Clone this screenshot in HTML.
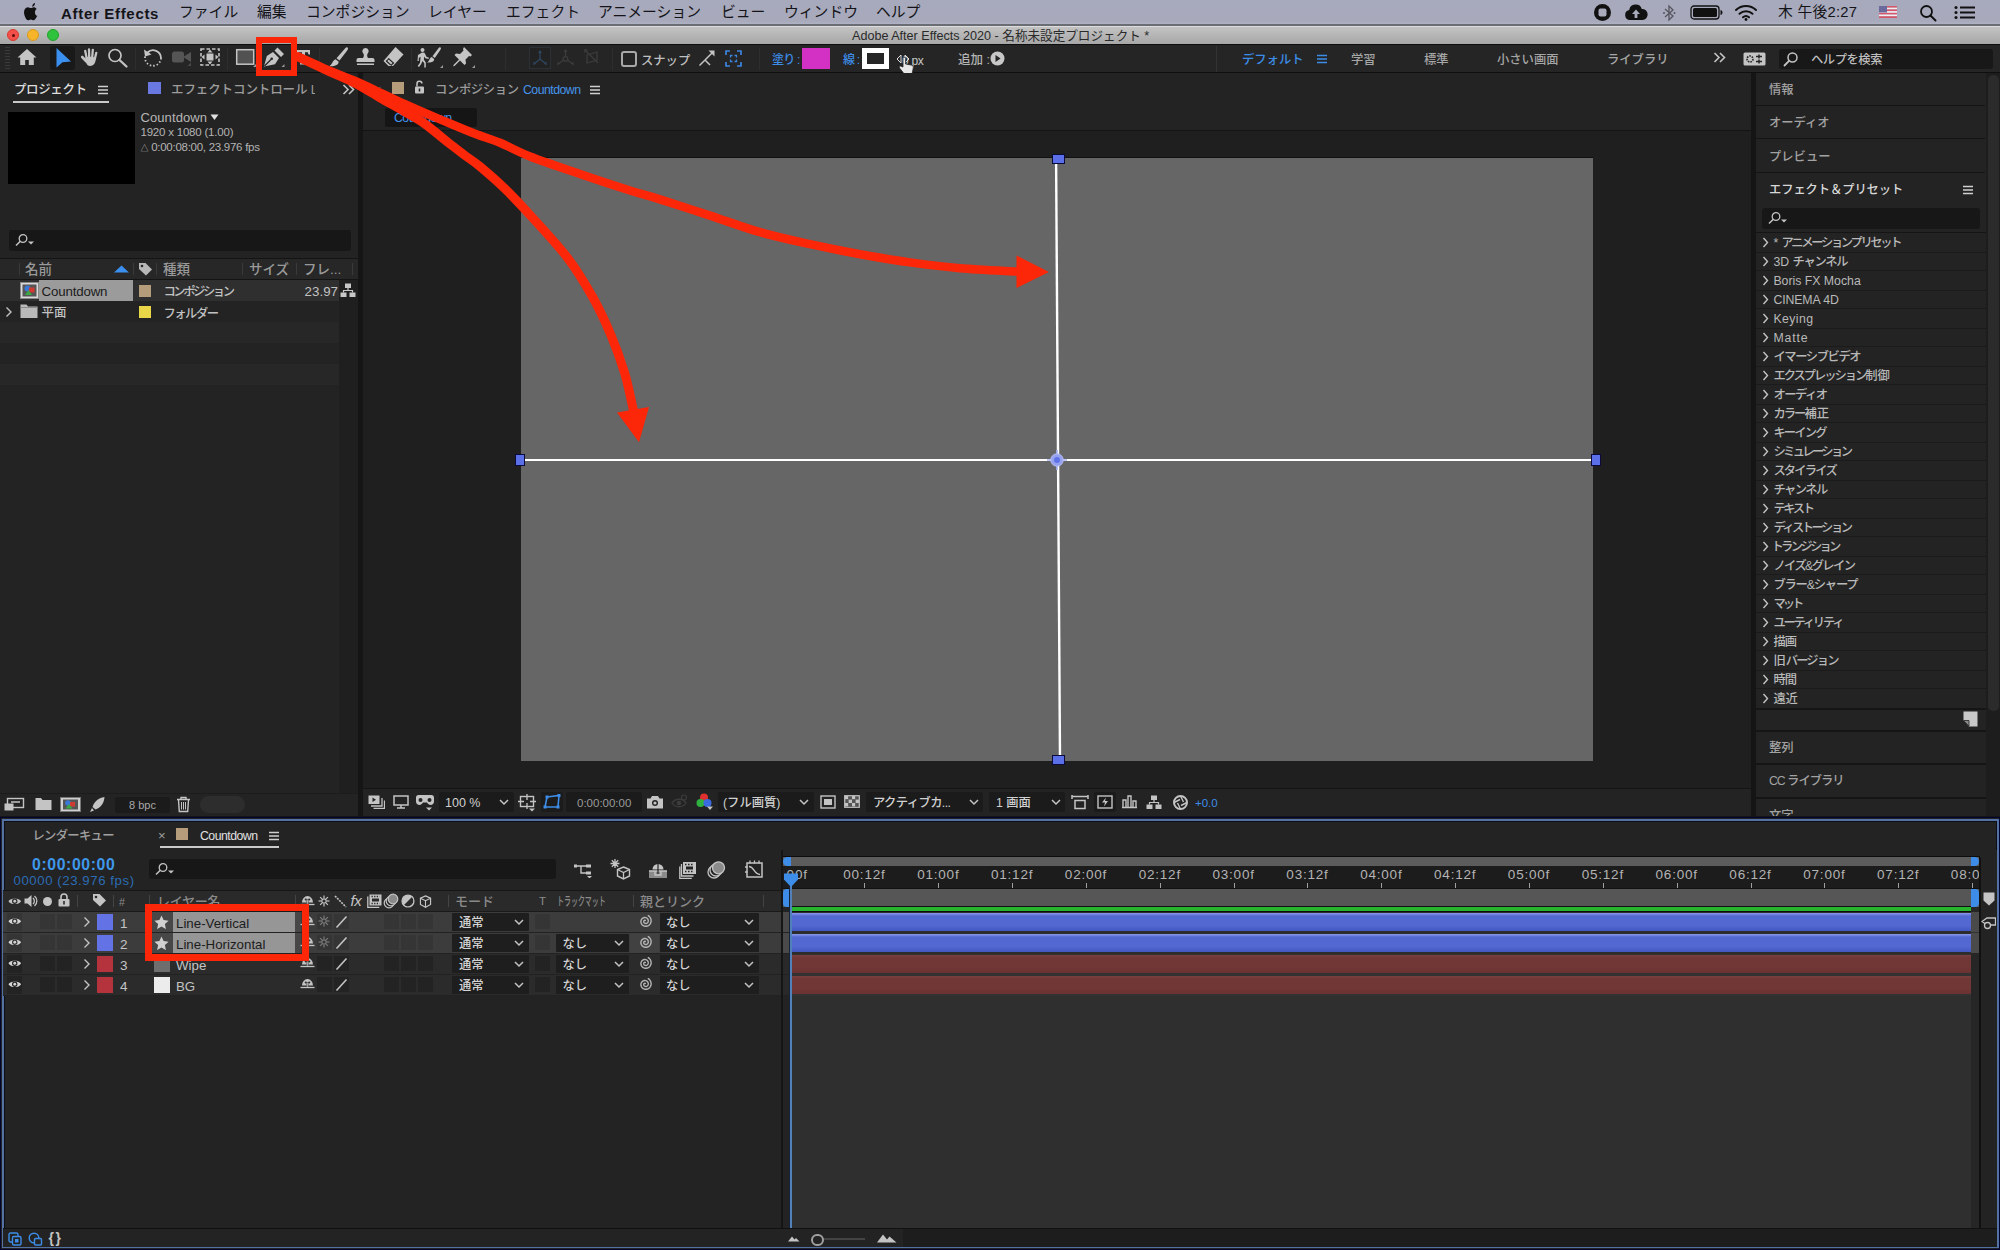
<!DOCTYPE html>
<html lang="ja"><head><meta charset="utf-8"><title>Adobe After Effects 2020</title>
<style>
html,body{margin:0;padding:0;background:#232323;}
body{width:2000px;height:1250px;overflow:hidden;font-family:"Liberation Sans","Noto Sans CJK JP",sans-serif;}
#root{position:relative;width:2000px;height:1250px;overflow:hidden;background:#232323;}
#root div,#root span,#root svg{position:absolute;box-sizing:border-box;}
.t{white-space:nowrap;line-height:1;font-weight:500;}
</style></head><body><div id="root">
<div style="left:0px;top:0px;width:2000px;height:25px;background:linear-gradient(#a7a9bc 0,#a8aabc 85%,#b2b6c6 100%);"></div>
<div style="left:0px;top:24px;width:2000px;height:2px;background:#6b6d74;"></div>
<svg style="left:21px;top:3px;" width="18" height="19" viewBox="0 0 18 19"><path fill="#111" d="M12.6 1c.1 1-.3 2-.9 2.700-.7.800-1.700 1.300-2.600 1.200-.1-1 .4-2 .9-2.600C10.700 1.500 11.800 1 12.600 1zM15.600 14.200c-.5 1.100-.7 1.600-1.300 2.500-.9 1.300-2.100 2.900-3.600 2.900-1.300 0-1.700-.9-3.500-.9s-2.200.9-3.500.9c-1.500 0-2.700-1.500-3.500-2.800C-2 13.600-2.200 9.700-.7 7.700c1-1.400 2.600-2.200 4.100-2.200 1.500 0 2.500.9 3.800.9 1.200 0 2-.9 3.800-.9 1.300 0 2.700.7 3.700 2-3.300 1.800-2.700 6.400.9 7.700z" transform="translate(4.300,-0.800) scale(0.770,0.920)"/></svg>
<span class="t" style="left:61px;top:5.5px;font-size:15px;color:#141418;letter-spacing:0.69px;font-weight:bold;">After Effects</span>
<span class="t" style="left:179px;top:5px;font-size:14.8px;color:#141418;font-weight:400;">ファイル</span>
<span class="t" style="left:257px;top:5px;font-size:14.8px;color:#141418;font-weight:400;">編集</span>
<span class="t" style="left:306px;top:5px;font-size:14.8px;color:#141418;font-weight:400;">コンポジション</span>
<span class="t" style="left:428px;top:5px;font-size:14.8px;color:#141418;font-weight:400;">レイヤー</span>
<span class="t" style="left:506px;top:5px;font-size:14.8px;color:#141418;font-weight:400;">エフェクト</span>
<span class="t" style="left:598px;top:5px;font-size:14.8px;color:#141418;font-weight:400;">アニメーション</span>
<span class="t" style="left:721px;top:5px;font-size:14.8px;color:#141418;font-weight:400;">ビュー</span>
<span class="t" style="left:784px;top:5px;font-size:14.8px;color:#141418;font-weight:400;">ウィンドウ</span>
<span class="t" style="left:876px;top:5px;font-size:14.8px;color:#141418;font-weight:400;">ヘルプ</span>
<svg style="left:1593px;top:3px;" width="19" height="19" viewBox="0 0 19 19"><circle cx="9.5" cy="9.5" r="8.5" fill="#111"/><rect x="5.500" y="5.500" width="8" height="8" rx="2" fill="#a8aabc"/></svg>
<svg style="left:1624px;top:3px;" width="24" height="18" viewBox="0 0 24 18"><path fill="#111" d="M6 17a5 5 0 0 1-.8-9.900A6.500 6.500 0 0 1 17.800 6 5.500 5.500 0 0 1 18.500 17z"/><path fill="#a8aabc" d="M12 6.500l4 4.500h-2.600v4h-2.800v-4H8z"/></svg>
<svg style="left:1662px;top:4px;" width="14" height="18" viewBox="0 0 14 18"><path fill="none" stroke="#55555f" stroke-width="1.300" d="M3 5l8 7-4 4V2l4 4-8 7"/><circle cx="2" cy="9" r="1" fill="#55555f"/><circle cx="12.500" cy="9" r="1" fill="#55555f"/></svg>
<svg style="left:1690px;top:5px;" width="34" height="15" viewBox="0 0 34 15"><rect x="1" y="1" width="28" height="13" rx="3" fill="none" stroke="#111" stroke-width="1.300"/><rect x="3" y="3" width="24" height="9" rx="1.500" fill="#111"/><path d="M30.500 5v5c1.400-.3 2-1.300 2-2.500s-.6-2.200-2-2.500z" fill="#111"/></svg>
<svg style="left:1734px;top:4px;" width="24" height="17" viewBox="0 0 24 17"><g fill="none" stroke="#111" stroke-width="2" stroke-linecap="round"><path d="M2 6a14.500 14.500 0 0 1 20 0"/><path d="M5.500 9.800a9.500 9.500 0 0 1 13 0"/><path d="M9 13.300a4.500 4.500 0 0 1 6 0"/></g><circle cx="12" cy="15.500" r="1.400" fill="#111"/></svg>
<span class="t" style="left:1778px;top:5px;font-size:14.8px;color:#141418;letter-spacing:0.24px;font-weight:400;">木 午後2:27</span>
<svg style="left:1879px;top:6px;" width="18" height="12" viewBox="0 0 18 12"><rect x="0" y="0.00" width="18" height="1.71" fill="#d6566a"/><rect x="0" y="1.71" width="18" height="1.71" fill="#f2eef2"/><rect x="0" y="3.43" width="18" height="1.71" fill="#d6566a"/><rect x="0" y="5.14" width="18" height="1.71" fill="#f2eef2"/><rect x="0" y="6.86" width="18" height="1.71" fill="#d6566a"/><rect x="0" y="8.57" width="18" height="1.71" fill="#f2eef2"/><rect x="0" y="10.29" width="18" height="1.71" fill="#d6566a"/><rect x="0" y="0" width="8" height="6.500" fill="#6a6a9c"/></svg>
<svg style="left:1919px;top:4px;" width="18" height="18" viewBox="0 0 18 18"><circle cx="7.500" cy="7.500" r="5.500" fill="none" stroke="#111" stroke-width="1.800"/><path d="M11.500 11.500l5 5" stroke="#111" stroke-width="2" stroke-linecap="round"/></svg>
<svg style="left:1954px;top:5px;" width="22" height="15" viewBox="0 0 22 15"><g fill="#111"><circle cx="2" cy="2.500" r="1.500"/><circle cx="2" cy="7.500" r="1.500"/><circle cx="2" cy="12.500" r="1.500"/><rect x="6" y="1.500" width="15" height="2"/><rect x="6" y="6.500" width="15" height="2"/><rect x="6" y="11.500" width="15" height="2"/></g></svg>
<div style="left:0px;top:26px;width:2000px;height:18px;background:linear-gradient(#c3c3c3,#a7a7a7);border-top:1px solid #dcdcdc;"></div>
<div style="left:7px;top:29px;width:12px;height:12px;background:#f4504a;border-radius:50%;border:0.5px solid #d8382f;"></div>
<div style="left:27px;top:29px;width:12px;height:12px;background:#f6b42a;border-radius:50%;border:0.5px solid #d99a1c;"></div>
<div style="left:47px;top:29px;width:12px;height:12px;background:#2fc23c;border-radius:50%;border:0.5px solid #1fa22b;"></div>
<div style="left:11.5px;top:33.5px;width:3px;height:3px;background:#5a0f0c;border-radius:50%;"></div>
<span class="t" style="left:852px;top:30px;font-size:12.6px;color:#2a2a2a;font-weight:400;">Adobe After Effects 2020 - 名称未設定プロジェクト *</span>
<div style="left:0px;top:44px;width:2000px;height:29px;background:#252525;"></div>
<div style="left:0px;top:44px;width:2000px;height:1px;background:#0e0e0e;"></div>
<div style="left:0px;top:72px;width:2000px;height:1px;background:#0f0f0f;"></div>
<div style="left:5px;top:47px;width:5px;height:22px;background:repeating-linear-gradient(#3a3a3a 0 1px,transparent 1px 3px);"></div>
<svg style="left:17px;top:48px;" width="20" height="18" viewBox="0 0 20 18"><path fill="#c4c4c4" d="M10 1L0.500 9.500h2.700V17h5v-5h3.600v5h5V9.500h2.700z"/></svg>
<div style="left:50px;top:46px;width:25px;height:24px;background:#191919;border-radius:3px;"></div>
<svg style="left:54px;top:46px;" width="20" height="24" viewBox="0 0 20 24"><path fill="#3b8fee" d="M2.500 2L17 15.500l-8.500 0.700L2.500 21.500z"/></svg>
<svg style="left:80px;top:47px;" width="20" height="20" viewBox="0 0 20 20"><g stroke="#c4c4c4" stroke-width="2.300" stroke-linecap="round" fill="none"><path d="M5.200 3.800L6.600 11"/><path d="M9 2.300L9.200 10"/><path d="M12.800 3L12.200 10.500"/><path d="M16.300 5.800L14.800 12"/><path d="M2.200 10L6.500 14.500" stroke-width="2.600"/></g><path d="M5.500 10.500c2-1.200 7.500-1.200 10.300 0.500 0 4-1.500 8-5.800 8-3 0-4.500-3-4.500-8.500z" fill="#c4c4c4"/></svg>
<svg style="left:106px;top:47px;" width="24" height="22" viewBox="0 0 24 22"><circle cx="9" cy="8.500" r="6" fill="none" stroke="#c4c4c4" stroke-width="1.700"/><path d="M13.500 13l7 6.500" stroke="#c4c4c4" stroke-width="2.300" stroke-linecap="round"/></svg>
<div style="left:135px;top:48px;width:1px;height:22px;background:#2e2e2e;"></div>
<svg style="left:142px;top:47px;" width="22" height="22" viewBox="0 0 22 22"><path d="M5.500 5.500A8 8 0 0 1 19 11" fill="none" stroke="#c4c4c4" stroke-width="1.800"/><path d="M19 11A8 8 0 1 1 3.200 9" fill="none" stroke="#c4c4c4" stroke-width="1.800" stroke-dasharray="1.500 2"/><path fill="#c4c4c4" d="M2 2.500l1 7 6.500-2z"/></svg>
<svg style="left:171px;top:50px;" width="24" height="18" viewBox="0 0 24 18"><rect x="1" y="1.500" width="12" height="11" rx="2.500" fill="#555"/><path d="M12 7l8-5v10z" fill="#555"/><path d="M20 16h-3.500l3.500-3.500z" fill="#4a4a4a"/></svg>
<svg style="left:200px;top:48px;" width="20" height="18" viewBox="0 0 20 18"><rect x="1" y="1" width="18" height="16" fill="none" stroke="#c4c4c4" stroke-width="1.600" stroke-dasharray="3.500 2"/><rect x="6.500" y="5.500" width="7" height="7" fill="#c4c4c4"/><path fill="#c4c4c4" d="M10 1.500l2.500 3h-5zM10 16.500l2.500-3h-5zM1.500 9l3-2.500v5zM18.500 9l-3-2.500v5z"/></svg>
<div style="left:227px;top:48px;width:1px;height:22px;background:#2e2e2e;"></div>
<svg style="left:235px;top:48px;" width="22" height="20" viewBox="0 0 22 20"><rect x="1.700" y="1.700" width="17" height="14.500" fill="#525252" stroke="#c4c4c4" stroke-width="1.500"/><path d="M21 19h-3l3-3z" fill="#999"/></svg>
<svg style="left:263px;top:47px;" width="22" height="21" viewBox="0 0 22 21"><path fill="#c4c4c4" d="M1 19.500l2.800-10.500L10 5l6 6-4 6.200zM11.500 3.500l3-3 6.500 6.500-3 3z"/><path d="M1.500 19l6.500-6.500" stroke="#252525" stroke-width="1.200"/><circle cx="8.700" cy="11.800" r="1.300" fill="#252525"/><path d="M21.500 20h-3l3-3z" fill="#999"/></svg>
<svg style="left:296px;top:49px;" width="16" height="18" viewBox="0 0 16 18"><path fill="#c4c4c4" d="M1 1h13v4.500h-1.500l-.7-2.200H9v10.500l2 .5v1.200H4v-1.200l2-.5V3.300H3.200l-.7 2.200H1z"/><path d="M15.500 17.500h-3l3-3z" fill="#999"/></svg>
<div style="left:319px;top:48px;width:1px;height:22px;background:#2e2e2e;"></div>
<svg style="left:328px;top:47px;" width="21" height="20" viewBox="0 0 21 20"><path fill="#c4c4c4" d="M19.500.5c1 .8.300 2-.3 3L11.500 13.500l-3-2.300L17 1.500c.7-.8 1.700-1.600 2.500-1zM7.500 12.200l3 2.400c.5 2.500-2 4.800-9.500 4.600 3.500-1.500 3-5.500 6.500-7z"/></svg>
<svg style="left:355px;top:47px;" width="21" height="20" viewBox="0 0 21 20"><path fill="#c4c4c4" d="M10.500 1a3.200 3.200 0 0 1 2.200 5.500c-.8 1-.8 3 .3 4.500h4.500c1.200 0 2 .8 2 2v2H1.500v-2c0-1.200.8-2 2-2H8c1.100-1.500 1.100-3.500.3-4.500A3.200 3.200 0 0 1 10.500 1zM2 16.500h17V18H2z"/></svg>
<svg style="left:382px;top:46px;" width="23" height="22" viewBox="0 0 23 22"><path fill="#c4c4c4" d="M13.500 1l8 7.500L11 20H6.500L1.500 15z"/><path d="M4.200 14.800l4.500 4M6.300 12.500l5.500 5" stroke="#252525" stroke-width="1.300"/><path d="M4 15l2.500-2.700 5.300 5L9.500 20z" fill="#252525"/><path d="M5.300 15l1.400-1.500 3.800 3.500-1.400 1.600z" fill="#c4c4c4"/></svg>
<div style="left:411px;top:48px;width:1px;height:22px;background:#2e2e2e;"></div>
<svg style="left:416px;top:47px;" width="28" height="22" viewBox="0 0 28 22"><circle cx="6.500" cy="3" r="2" fill="#c4c4c4"/><path fill="#c4c4c4" d="M2 8l4-2.500 2.500.3 2 4 2.500 1-.5 1.300-3.200-.9-1-1.600-.5 3 2 3v5H8.300v-4.300L6.500 14l-1.300 3L3 20l-1.300-.9L4 15.700l.6-6-1.800 1.200V14H1.500z"/><path fill="#c4c4c4" d="M24.500.5c.9.700.3 1.700-.2 2.500l-5.500 8-2.300-1.800L22.300 1.400c.6-.7 1.500-1.400 2.200-.9zM15.700 10l2.400 1.900c.4 2-1.600 3.800-7.100 3.600 2.700-1.200 2-4.300 4.700-5.500z"/><path d="M27 21h-3l3-3z" fill="#999"/></svg>
<svg style="left:452px;top:46px;" width="24" height="23" viewBox="0 0 24 23"><path fill="#c4c4c4" d="M12 1l8 8-1.500 1.500-1.500-.5-3.500 3.500.5 4-1.500 1.500-4.500-4.500-5.500 5.500-1.200.2.200-1.200 5.500-5.500L2.500 9 4 7.500l4 .5L11.500 4.500 11 3z"/><path d="M23 22h-3l3-3z" fill="#999"/></svg>
<div style="left:505px;top:48px;width:1px;height:22px;background:#2e2e2e;"></div>
<div style="left:529px;top:47px;width:22px;height:22px;background:#222;border:1px solid #2b3036;"></div>
<svg style="left:531px;top:49px;" width="18" height="18" viewBox="0 0 18 18"><path d="M9 2v8M9 10l-6 5M9 10l6 5" stroke="#2e4660" stroke-width="1.300" fill="none"/><path d="M9 1l2 3H7zM2 16l.8-3.500 2 2.500zM16 16l-.8-3.500-2 2.500z" fill="#2e4660"/></svg>
<svg style="left:556px;top:49px;" width="19" height="18" viewBox="0 0 19 18"><path d="M9.500 2v6M7.500 11l-5 4M11.500 11l5 4" stroke="#3c3c3c" stroke-width="1.300" fill="none"/><circle cx="9.500" cy="10" r="2.300" fill="none" stroke="#3c3c3c" stroke-width="1.300"/><path d="M9.500 0l2 3h-4zM1 16l.8-3.500 2 2.500zM18 16l-.8-3.500-2 2.500z" fill="#3c3c3c"/></svg>
<svg style="left:583px;top:48px;" width="18" height="18" viewBox="0 0 18 18"><path d="M2 2l13 13M4 7l10-3v8L4 15z" stroke="#3c3c3c" stroke-width="1.300" fill="none"/><path d="M1 1l4 .5L1.500 5z" fill="#3c3c3c"/></svg>
<div style="left:612px;top:48px;width:1px;height:22px;background:#2e2e2e;"></div>
<div style="left:621px;top:51px;width:16px;height:16px;border:2px solid #a8a8a8;border-radius:3px;"></div>
<span class="t" style="left:641px;top:55px;font-size:12.3px;color:#c0c0c0;">スナップ</span>
<svg style="left:698px;top:49px;" width="18" height="18" viewBox="0 0 18 18"><path d="M1.500 16.500L7 11l5 5M7 11l7-7" stroke="#c4c4c4" stroke-width="1.500" fill="none" stroke-dasharray="0"/><path d="M16.500 1.500v6l-6-6z" fill="#c4c4c4"/></svg>
<svg style="left:725px;top:50px;" width="17" height="17" viewBox="0 0 17 17"><g stroke="#3d84de" stroke-width="1.700" fill="none"><path d="M1 5V1h4M12 1h4v4M16 12v4h-4M5 16H1v-4"/><path d="M5.500 7.500v-2h2M9.500 5.500h2v2M11.500 9.500v2h-2M7.500 11.500h-2v-2" stroke-width="1.300"/></g></svg>
<div style="left:759px;top:48px;width:1px;height:22px;background:#2e2e2e;"></div>
<span class="t" style="left:772px;top:54px;font-size:12px;color:#3d8de8;letter-spacing:-0.800px;">塗り :</span>
<div style="left:802px;top:48px;width:28px;height:21px;background:#d331c4;"></div>
<span class="t" style="left:843px;top:54px;font-size:12px;color:#3d8de8;letter-spacing:-0.800px;">線 :</span>
<div style="left:862px;top:48px;width:27px;height:21px;background:#ffffff;"></div>
<div style="left:867px;top:53px;width:17px;height:11px;background:#262626;"></div>
<span class="t" style="left:902px;top:55px;font-size:12px;color:#c8c8c8;letter-spacing:-0.3px;">0 px</span>
<svg style="left:896px;top:52px;" width="16" height="14" viewBox="0 0 16 14"><path d="M1 7l4-4v8zM13 7l-4-4v8z" fill="none" stroke="#ddd" stroke-width="1"/></svg>
<svg style="left:897px;top:55px;" width="20" height="22" viewBox="0 0 20 22"><path fill="#e8e8e8" stroke="#222" stroke-width="0.800" d="M6 12V3.500c0-1.800 2.600-1.800 2.600 0V9l5.500 1c1.500.3 2.400 1.200 2.200 2.800l-.8 4.200c-.3 1.500-1.300 2.500-3 2.500H9.500c-1.500 0-2.400-.6-3.200-1.700L2.500 13c-.9-1.300.8-2.600 2-1.500z"/></svg>
<span class="t" style="left:958px;top:54px;font-size:12.5px;color:#b4b4b4;">追加 :</span>
<svg style="left:990px;top:51px;" width="15" height="15" viewBox="0 0 15 15"><circle cx="7.500" cy="7.500" r="7" fill="#c8c8c8"/><path d="M5.500 4l5 3.500-5 3.500z" fill="#252525"/></svg>
<div style="left:1216px;top:46px;width:1px;height:26px;background:#333;"></div>
<span class="t" style="left:1242px;top:54px;font-size:12.3px;color:#3d8de8;">デフォルト</span>
<svg style="left:1317px;top:54px;" width="10" height="10" viewBox="0 0 10 10"><path d="M0 1.500h10M0 5h10M0 8.500h10" stroke="#3d8de8" stroke-width="1.400"/></svg>
<span class="t" style="left:1351px;top:54px;font-size:12.3px;color:#a6a6a6;">学習</span>
<span class="t" style="left:1424px;top:54px;font-size:12.3px;color:#a6a6a6;">標準</span>
<span class="t" style="left:1497px;top:54px;font-size:12.3px;color:#a6a6a6;">小さい画面</span>
<span class="t" style="left:1607px;top:54px;font-size:12.3px;color:#a6a6a6;">ライブラリ</span>
<svg style="left:1713px;top:51.5px;" width="13" height="11" viewBox="0 0 13 11"><path d="M1.500 1l4.500 4.500L1.500 10M7 1l4.500 4.500L7 10" stroke="#c4c4c4" stroke-width="1.600" fill="none"/></svg>
<svg style="left:1742.5px;top:51.5px;" width="23" height="14" viewBox="0 0 23 14"><rect x="0.500" y="0.500" width="22" height="13" rx="1.500" fill="#c4c4c4"/><circle cx="7" cy="7" r="3" fill="none" stroke="#252525" stroke-width="1.600" stroke-dasharray="1.600 1"/><path d="M13 4.500h6M13 9.500h6M16 2.500v4M16 7.500v4" stroke="#252525" stroke-width="1.500"/></svg>
<div style="left:1779px;top:49px;width:214px;height:19.5px;background:#181818;border-radius:3px;"></div>
<svg style="left:1783px;top:51px;" width="16" height="16" viewBox="0 0 16 16"><circle cx="9.500" cy="6.500" r="4.500" fill="none" stroke="#c4c4c4" stroke-width="1.500"/><path d="M6.300 9.700L1.500 14.500" stroke="#c4c4c4" stroke-width="1.800" stroke-linecap="round"/></svg>
<span class="t" style="left:1811px;top:54px;font-size:12.3px;color:#bdbdbd;letter-spacing:-0.46px;">ヘルプを検索</span>
<div style="left:0px;top:73px;width:358px;height:743px;background:#232323;"></div>
<div style="left:358px;top:73px;width:5px;height:743px;background:#151515;"></div>
<span class="t" style="left:14px;top:84px;font-size:12.5px;color:#dedede;letter-spacing:-0.40px;font-weight:500;">プロジェクト</span>
<svg style="left:98px;top:85px;" width="11" height="10" viewBox="0 0 11 10"><path d="M0 1.500h10M0 5h10M0 8.500h10" stroke="#cfcfcf" stroke-width="1.300"/></svg>
<div style="left:13px;top:101px;width:96px;height:2px;background:#c9c9c9;"></div>
<div style="left:148px;top:82px;width:13px;height:12px;background:#6a78e2;"></div>
<span class="t" style="left:171px;top:84px;font-size:12.5px;color:#9c9c9c;width:144px;overflow:hidden;letter-spacing:-0.100px;">エフェクトコントロール L</span>
<svg style="left:342px;top:84px;" width="13" height="11" viewBox="0 0 13 11"><path d="M1.500 1l4.500 4.500L1.500 10M7 1l4.500 4.500L7 10" stroke="#c4c4c4" stroke-width="1.600" fill="none"/></svg>
<div style="left:8px;top:112px;width:127px;height:72px;background:#000;"></div>
<span class="t" style="left:140.5px;top:110.5px;font-size:13px;color:#b6b6b6;letter-spacing:0.09px;">Countdown</span>
<svg style="left:210px;top:114px;" width="9" height="7" viewBox="0 0 9 7"><path d="M0.500 0.500h8L4.500 6z" fill="#e0e0e0"/></svg>
<span class="t" style="left:140.5px;top:127px;font-size:11.5px;color:#b4b4b4;letter-spacing:-0.21px;">1920 x 1080 (1.00)</span>
<span class="t" style="left:140.5px;top:142px;font-size:11.5px;color:#b4b4b4;letter-spacing:-0.27px;"><span style="position:static;font-size:8px;">△</span> 0:00:08:00, 23.976 fps</span>
<div style="left:9px;top:230px;width:342px;height:21px;background:#171717;border-radius:3px;"></div>
<svg style="left:15px;top:233px;" width="22" height="14" viewBox="0 0 22 14"><circle cx="8" cy="5.500" r="3.800" fill="none" stroke="#c4c4c4" stroke-width="1.300"/><path d="M5.300 8.200L1 12.500" stroke="#c4c4c4" stroke-width="1.500"/><path d="M13 8.500h6l-3 3z" fill="#c4c4c4"/></svg>
<div style="left:0px;top:258px;width:358px;height:1px;background:#141414;"></div>
<div style="left:0px;top:259px;width:358px;height:20px;background:#272727;"></div>
<div style="left:0px;top:279px;width:358px;height:1px;background:#141414;"></div>
<div style="left:19px;top:263px;width:1px;height:12px;background:#3a3a3a;"></div>
<div style="left:133px;top:263px;width:1px;height:12px;background:#3a3a3a;"></div>
<div style="left:156px;top:263px;width:1px;height:12px;background:#3a3a3a;"></div>
<div style="left:242px;top:263px;width:1px;height:12px;background:#3a3a3a;"></div>
<div style="left:296px;top:263px;width:1px;height:12px;background:#3a3a3a;"></div>
<div style="left:352px;top:263px;width:1px;height:12px;background:#3a3a3a;"></div>
<span class="t" style="left:25px;top:263px;font-size:13.5px;color:#9a9a9a;">名前</span>
<svg style="left:114px;top:265px;" width="15" height="8" viewBox="0 0 15 8"><path d="M0 7.500L7.500 0.500 15 7.500z" fill="#3b8fee"/></svg>
<svg style="left:138px;top:262px;" width="15" height="15" viewBox="0 0 15 15"><path d="M1 1h6.500l6.500 6.500L8 13.500 1 7z" fill="#b8b8b8"/><circle cx="4" cy="4" r="1.300" fill="#272727"/></svg>
<span class="t" style="left:163px;top:263px;font-size:13.5px;color:#9a9a9a;">種類</span>
<span class="t" style="left:249px;top:263px;font-size:13.5px;color:#9a9a9a;">サイズ</span>
<span class="t" style="left:303px;top:263px;font-size:13.5px;color:#9a9a9a;">フレ...</span>
<div style="left:0px;top:280px;width:339px;height:21px;background:#2f2f2f;"></div>
<div style="left:339px;top:280px;width:19px;height:513px;background:#1f1f1f;"></div>
<div style="left:0px;top:322px;width:339px;height:21px;background:#272727;"></div>
<div style="left:0px;top:364px;width:339px;height:21px;background:#272727;"></div>
<svg style="left:20px;top:281px;" width="19" height="19" viewBox="0 0 19 19"><rect x="0.500" y="1.500" width="18" height="16" fill="#d9d9d9" stroke="#888" stroke-width="1"/><rect x="2.500" y="3.500" width="14" height="12" fill="#555"/><circle cx="7.500" cy="7.500" r="3" fill="#3a78d8"/><rect x="9" y="6.500" width="5.500" height="5" fill="#d03a30"/><path d="M5 14l3.500-5 3.500 5z" fill="#39a845"/></svg>
<div style="left:39px;top:280px;width:94px;height:21px;background:#9b9b9b;"></div>
<span class="t" style="left:41.5px;top:285px;font-size:13.3px;color:#1c1c1c;letter-spacing:-0.16px;">Countdown</span>
<div style="left:139px;top:285px;width:12px;height:12px;background:#b59c7a;"></div>
<span class="t" style="left:163.5px;top:286px;font-size:12.3px;color:#c2c2c2;letter-spacing:-2.43px;">コンポジション</span>
<span class="t" style="left:304.5px;top:285px;font-size:13.3px;color:#c2c2c2;letter-spacing:0.05px;">23.97</span>
<svg style="left:340px;top:283px;" width="16" height="15" viewBox="0 0 16 15"><g fill="#c8c8c8"><rect x="5" y="0.500" width="6" height="4.500"/><rect x="0.500" y="9.500" width="6" height="4.500"/><rect x="9.500" y="9.500" width="6" height="4.500"/></g><path d="M8 5v2.500M3.500 9.500v-2h9v2" stroke="#c8c8c8" stroke-width="1.200" fill="none"/></svg>
<svg style="left:5px;top:306px;" width="7" height="12" viewBox="0 0 7 12"><path d="M1.500 1.500L6 6l-4.500 4.500" stroke="#c4c4c4" stroke-width="1.400" fill="none"/></svg>
<svg style="left:20px;top:303px;" width="18" height="16" viewBox="0 0 18 16"><path d="M0.500 1.500h6l1.500 2h9.500V15H0.500z" fill="#b9b9b9"/><path d="M0.500 4.500h17" stroke="#8a8a8a" stroke-width="1"/></svg>
<span class="t" style="left:41.5px;top:307px;font-size:12.5px;color:#c2c2c2;">平面</span>
<div style="left:139px;top:306px;width:12px;height:12px;background:#e9d648;"></div>
<span class="t" style="left:163.5px;top:308px;font-size:12.3px;color:#c2c2c2;letter-spacing:-1.50px;">フォルダー</span>
<div style="left:0px;top:793px;width:358px;height:1px;background:#1c1c1c;"></div>
<div style="left:0px;top:794px;width:358px;height:22px;background:#232323;"></div>
<svg style="left:4px;top:797px;" width="21" height="15" viewBox="0 0 21 15"><rect x="3.500" y="1.500" width="16" height="9" fill="none" stroke="#c4c4c4" stroke-width="1.400"/><rect x="0.500" y="6.500" width="9" height="7" fill="#c4c4c4"/><path d="M7 5h9" stroke="#c4c4c4" stroke-width="1.500"/></svg>
<svg style="left:35px;top:797px;" width="17" height="14" viewBox="0 0 17 14"><path d="M0.500 1h5.500l1.500 2h9V13H0.500z" fill="#c4c4c4"/></svg>
<svg style="left:60px;top:796px;" width="21" height="17" viewBox="0 0 21 17"><rect x="0.500" y="1.500" width="20" height="14" fill="#d0d0d0" stroke="#777"/><rect x="3" y="3.500" width="15" height="10" fill="#555"/><circle cx="8" cy="7" r="2.800" fill="#3a78d8"/><rect x="10" y="6" width="5" height="4.500" fill="#d03a30"/><path d="M5.500 12.500l3.500-4.500 3.500 4.500z" fill="#39a845"/></svg>
<svg style="left:89px;top:796px;" width="17" height="17" viewBox="0 0 17 17"><path d="M15.500 1C9 2 5 6 3.500 11l3 2.500C11 12 15 8 15.500 1zM3 12l-2 4 4-1.500z" fill="#c4c4c4"/></svg>
<div style="left:115px;top:797px;width:55px;height:16px;background:#1b1b1b;border-radius:2px;"></div>
<span class="t" style="left:129px;top:800px;font-size:11px;color:#a8a8a8;">8 bpc</span>
<svg style="left:176px;top:796px;" width="15" height="17" viewBox="0 0 15 17"><path d="M1 3.500h13M5 3V1.500h5V3M2.500 4l.8 11.500h8.400L12.500 4" fill="none" stroke="#c4c4c4" stroke-width="1.400"/><path d="M5.500 6v7.500M7.500 6v7.500M9.500 6v7.500" stroke="#c4c4c4" stroke-width="1"/></svg>
<div style="left:200px;top:796px;width:45px;height:17px;background:#2d2d2d;border-radius:9px;"></div>
<div style="left:363px;top:73px;width:1388px;height:743px;background:#232323;"></div>
<div style="left:1751px;top:73px;width:5px;height:743px;background:#151515;"></div>
<span class="t" style="left:374px;top:83px;font-size:13px;color:#6a6a6a;">×</span>
<div style="left:392px;top:82px;width:12px;height:12px;background:#b59c7a;"></div>
<svg style="left:414px;top:80px;" width="11" height="14" viewBox="0 0 11 14"><rect x="1" y="6.500" width="9" height="7" rx="1" fill="#c4c4c4"/><path d="M3 6.500V4a2.500 2.500 0 0 1 5-0.500" fill="none" stroke="#c4c4c4" stroke-width="1.500"/><rect x="4.700" y="8.500" width="1.600" height="3" fill="#232323"/></svg>
<span class="t" style="left:435px;top:84px;font-size:12.3px;color:#9c9c9c;letter-spacing:-0.35px;">コンポジション</span>
<span class="t" style="left:523px;top:84px;font-size:12.3px;color:#4594ea;letter-spacing:-0.53px;">Countdown</span>
<svg style="left:590px;top:85px;" width="11" height="10" viewBox="0 0 11 10"><path d="M0 1.500h10M0 5h10M0 8.500h10" stroke="#cfcfcf" stroke-width="1.300"/></svg>
<div style="left:385px;top:108px;width:92px;height:19px;background:#151515;border-radius:2px;"></div>
<span class="t" style="left:394px;top:112px;font-size:12.3px;color:#4594ea;letter-spacing:-0.53px;">Countdown</span>
<div style="left:363px;top:130px;width:1388px;height:1px;background:#141414;"></div>
<div style="left:363px;top:131px;width:1388px;height:658px;background:#1f1f1f;"></div>
<div style="left:521px;top:157px;width:1072px;height:1px;background:#111;"></div>
<div style="left:521px;top:158px;width:1072px;height:603px;background:#666666;"></div>
<svg style="left:500px;top:140px;" width="1120" height="640" viewBox="0 0 1120 640"><path d="M556.100 21L560 618" stroke="#fff" stroke-width="2.400" fill="none"/><path d="M23 320H1092" stroke="#fff" stroke-width="2.200" fill="none"/></svg>
<div style="left:1052px;top:154px;width:13px;height:10px;background:#5b70e8;border:1px solid #0a0a3c;"></div>
<div style="left:1052px;top:755px;width:13px;height:10px;background:#5b70e8;border:1px solid #0a0a3c;"></div>
<div style="left:514.5px;top:454px;width:10px;height:12px;background:#5b70e8;border:1px solid #0a0a3c;"></div>
<div style="left:1591px;top:454px;width:10px;height:12px;background:#5b70e8;border:1px solid #0a0a3c;"></div>
<svg style="left:1047px;top:450px;" width="20" height="20" viewBox="0 0 20 20"><path d="M10 0v20M0 10h20" stroke="#a6b0f2" stroke-width="1.600"/><circle cx="10" cy="10" r="6.200" fill="#96a2f0" stroke="#b8c0f6" stroke-width="1"/><circle cx="10" cy="10" r="3" fill="#5f73e6"/></svg>
<div style="left:363px;top:788px;width:1388px;height:1px;background:#141414;"></div>
<div style="left:363px;top:789px;width:1388px;height:27px;background:#232323;"></div>
<svg style="left:368px;top:795px;" width="17" height="14" viewBox="0 0 17 14"><rect x="0.500" y="0.500" width="11" height="8.500" fill="#c4c4c4"/><path d="M4.500 2.500v4.500l3.500-2.200z" fill="#232323"/><path d="M14 3v8H3M16.500 5.500v8H5.500" stroke="#c4c4c4" stroke-width="1.300" fill="none"/></svg>
<svg style="left:393px;top:795px;" width="16" height="14" viewBox="0 0 16 14"><rect x="1" y="1" width="14" height="9" fill="none" stroke="#c4c4c4" stroke-width="1.500"/><path d="M8 10v2.500M4 13h8" stroke="#c4c4c4" stroke-width="1.500"/></svg>
<svg style="left:415px;top:794px;" width="20" height="17" viewBox="0 0 20 17"><path d="M1 3.500C1 2 2 1 3.500 1h13C18 1 19 2 19 3.500v4c0 2-1.500 3.500-3.500 3.500-1.500 0-2.500-1-3.500-2.500h-4C7 10 6 11 4.500 11 2.500 11 1 9.500 1 7.500z" fill="#c4c4c4"/><circle cx="5.500" cy="6" r="2" fill="#232323"/><circle cx="14.500" cy="6" r="2" fill="#232323"/><path d="M11 13.500h6l-3 3z" fill="#c4c4c4"/></svg>
<div style="left:439px;top:792px;width:75px;height:20px;background:#1b1b1b;border-radius:2px;"></div>
<span class="t" style="left:445px;top:797px;font-size:12.5px;color:#d0d0d0;">100 %</span>
<svg style="left:499px;top:799px;" width="10" height="7" viewBox="0 0 10 7"><path d="M1 1l4 4 4-4" stroke="#c4c4c4" stroke-width="1.500" fill="none"/></svg>
<svg style="left:518px;top:794px;" width="19" height="18" viewBox="0 0 19 18"><rect x="2.500" y="2.500" width="13" height="10" fill="none" stroke="#c4c4c4" stroke-width="1.400"/><path d="M9 0v6M9 9v6M0 7.500h6M12 7.500h6" stroke="#c4c4c4" stroke-width="1.300"/><path d="M11 14.500h6l-3 3z" fill="#c4c4c4"/></svg>
<div style="left:541px;top:792px;width:22px;height:20px;background:#1b1b1b;border-radius:2px;"></div>
<svg style="left:543px;top:794px;" width="18" height="16" viewBox="0 0 18 16"><path d="M4 3l12-1.500-1 11.500H2z" fill="none" stroke="#3d8de8" stroke-width="1.600"/><g fill="#3d8de8"><rect x="2.500" y="1.500" width="3" height="3"/><rect x="14.500" y="0" width="3" height="3"/><rect x="13.500" y="11.500" width="3" height="3"/><rect x="0.500" y="11.500" width="3" height="3"/></g></svg>
<div style="left:566px;top:792px;width:76px;height:20px;background:#1b1b1b;border-radius:2px;"></div>
<span class="t" style="left:577px;top:798px;font-size:11.5px;color:#9a9a9a;">0:00:00:00</span>
<svg style="left:646px;top:795px;" width="18" height="14" viewBox="0 0 18 14"><path d="M1 3.500h3.500l1.500-2.500h6l1.500 2.500H17V13.500H1z" fill="#c4c4c4"/><circle cx="9" cy="8" r="3" fill="#232323"/><circle cx="9" cy="8" r="1.600" fill="#c4c4c4"/></svg>
<svg style="left:671px;top:794px;" width="18" height="16" viewBox="0 0 18 16"><path d="M1 9c3-5 11-5 14 0-3 5-11 5-14 0z" fill="none" stroke="#3c3c3c" stroke-width="1.400"/><circle cx="8" cy="9" r="2.300" fill="#3c3c3c"/><circle cx="13" cy="3.500" r="2.500" fill="none" stroke="#3c3c3c" stroke-width="1.200"/></svg>
<svg style="left:696px;top:793px;" width="18" height="18" viewBox="0 0 18 18"><circle cx="8" cy="4.500" r="4" fill="#e03030"/><circle cx="4.500" cy="10" r="4" fill="#30b040"/><circle cx="11.500" cy="10" r="4" fill="#3a6ae0"/><path d="M11 13.500h6l-3 3.500z" fill="#c4c4c4"/></svg>
<div style="left:718px;top:792px;width:96px;height:20px;background:#1b1b1b;border-radius:2px;"></div>
<span class="t" style="left:723px;top:797px;font-size:12.3px;color:#d0d0d0;">(フル画質)</span>
<svg style="left:799px;top:799px;" width="10" height="7" viewBox="0 0 10 7"><path d="M1 1l4 4 4-4" stroke="#c4c4c4" stroke-width="1.500" fill="none"/></svg>
<svg style="left:820px;top:795px;" width="16" height="14" viewBox="0 0 16 14"><rect x="1" y="1" width="14" height="12" fill="none" stroke="#c4c4c4" stroke-width="1.400"/><rect x="4" y="4" width="8" height="6" fill="#c4c4c4"/></svg>
<svg style="left:844px;top:795px;" width="16" height="13" viewBox="0 0 16 13"><rect x="1.0" y="1.0" width="3.5" height="3.5" fill="#c4c4c4"/><rect x="4.5" y="1.0" width="3.5" height="3.5" fill="#555"/><rect x="8.0" y="1.0" width="3.5" height="3.5" fill="#c4c4c4"/><rect x="11.5" y="1.0" width="3.5" height="3.5" fill="#555"/><rect x="1.0" y="4.5" width="3.5" height="3.5" fill="#555"/><rect x="4.5" y="4.5" width="3.5" height="3.5" fill="#c4c4c4"/><rect x="8.0" y="4.5" width="3.5" height="3.5" fill="#555"/><rect x="11.5" y="4.5" width="3.5" height="3.5" fill="#c4c4c4"/><rect x="1.0" y="8.0" width="3.5" height="3.5" fill="#c4c4c4"/><rect x="4.5" y="8.0" width="3.5" height="3.5" fill="#555"/><rect x="8.0" y="8.0" width="3.5" height="3.5" fill="#c4c4c4"/><rect x="11.5" y="8.0" width="3.5" height="3.5" fill="#555"/><rect x="0.700" y="0.700" width="14.600" height="11.600" fill="none" stroke="#c4c4c4" stroke-width="1.200"/></svg>
<div style="left:866px;top:792px;width:117px;height:20px;background:#1b1b1b;border-radius:2px;"></div>
<span class="t" style="left:873px;top:797px;font-size:12.3px;color:#d0d0d0;letter-spacing:-0.6px;">アクティブカ...</span>
<svg style="left:969px;top:799px;" width="10" height="7" viewBox="0 0 10 7"><path d="M1 1l4 4 4-4" stroke="#c4c4c4" stroke-width="1.500" fill="none"/></svg>
<div style="left:989px;top:792px;width:76px;height:20px;background:#1b1b1b;border-radius:2px;"></div>
<span class="t" style="left:996px;top:797px;font-size:12.3px;color:#d0d0d0;">1 画面</span>
<svg style="left:1051px;top:799px;" width="10" height="7" viewBox="0 0 10 7"><path d="M1 1l4 4 4-4" stroke="#c4c4c4" stroke-width="1.500" fill="none"/></svg>
<svg style="left:1071px;top:795px;" width="18" height="15" viewBox="0 0 18 15"><path d="M1 1.500h16M4 5.500h10v8H4z" fill="none" stroke="#c4c4c4" stroke-width="1.500"/><path d="M1 0v4M17 0v4" stroke="#c4c4c4" stroke-width="1.500"/></svg>
<div style="left:1094px;top:792px;width:22px;height:20px;background:#1b1b1b;border-radius:2px;"></div>
<svg style="left:1097px;top:795px;" width="17" height="14" viewBox="0 0 17 14"><rect x="1" y="1" width="14" height="12" fill="none" stroke="#c4c4c4" stroke-width="1.400"/><path d="M9 2.500l-4 5h3l-1 4 4-5.500H8z" fill="#c4c4c4"/></svg>
<svg style="left:1121px;top:794px;" width="17" height="15" viewBox="0 0 17 15"><path d="M1 13.500h15M2 13V6h3v7M7 13V2h3v11M12 13V7h3v6" fill="none" stroke="#c4c4c4" stroke-width="1.400"/></svg>
<svg style="left:1146px;top:795px;" width="16" height="15" viewBox="0 0 16 15"><g fill="#c4c4c4"><rect x="5" y="0.500" width="6" height="4.500"/><rect x="0.500" y="9.500" width="6" height="4.500"/><rect x="9.500" y="9.500" width="6" height="4.500"/></g><path d="M8 5v2.500M3.500 9.500v-2h9v2" stroke="#c4c4c4" stroke-width="1.200" fill="none"/></svg>
<svg style="left:1172px;top:794px;" width="17" height="17" viewBox="0 0 17 17"><circle cx="8.500" cy="8.500" r="6.500" fill="none" stroke="#c4c4c4" stroke-width="2"/><path d="M8.500 2l3 6M15 8.500l-6 3M8.500 15l-3-6M2 8.500l6-3" stroke="#c4c4c4" stroke-width="1.400"/></svg>
<span class="t" style="left:1195px;top:798px;font-size:11.5px;color:#3d8de8;">+0.0</span>
<div style="left:1756px;top:73px;width:230px;height:743px;background:#232323;"></div>
<div style="left:1986px;top:73px;width:14px;height:743px;background:#1d1d1d;"></div>
<div style="left:1988px;top:75px;width:11px;height:636px;background:#2b2b2b;border-radius:5px;"></div>
<span class="t" style="left:1769px;top:84px;font-size:12.3px;color:#a2a2a2;">情報</span>
<span class="t" style="left:1769px;top:117px;font-size:12.3px;color:#a2a2a2;">オーディオ</span>
<span class="t" style="left:1769px;top:151px;font-size:12.3px;color:#a2a2a2;">プレビュー</span>
<div style="left:1756px;top:104.5px;width:229px;height:1.8px;background:#151515;"></div>
<div style="left:1756px;top:137.5px;width:229px;height:1.8px;background:#151515;"></div>
<div style="left:1756px;top:171.5px;width:229px;height:1.8px;background:#151515;"></div>
<span class="t" style="left:1769px;top:184px;font-size:12.3px;color:#d8d8d8;font-weight:500;letter-spacing:-0.100px;">エフェクト＆プリセット</span>
<svg style="left:1963px;top:185px;" width="11" height="10" viewBox="0 0 11 10"><path d="M0 1.500h10M0 5h10M0 8.500h10" stroke="#cfcfcf" stroke-width="1.300"/></svg>
<div style="left:1762px;top:208px;width:218px;height:21px;background:#171717;border-radius:3px;"></div>
<svg style="left:1768px;top:211px;" width="22" height="14" viewBox="0 0 22 14"><circle cx="8" cy="5.500" r="3.800" fill="none" stroke="#c4c4c4" stroke-width="1.300"/><path d="M5.300 8.200L1 12.500" stroke="#c4c4c4" stroke-width="1.500"/><path d="M13 8.500h6l-3 3z" fill="#c4c4c4"/></svg>
<div style="left:1756px;top:232px;width:230px;height:1px;background:#151515;"></div>
<div style="left:1756px;top:252px;width:230px;height:1px;background:#1b1b1b;"></div>
<svg style="left:1762px;top:237px;" width="7" height="11" viewBox="0 0 7 11"><path d="M1.500 1l4 4.500-4 4.500" stroke="#c4c4c4" stroke-width="1.400" fill="none"/></svg>
<span class="t" style="left:1773.4px;top:237px;font-size:12.3px;color:#b9b9b9;letter-spacing:-2.34px;font-weight:500;"><span style="position:static;letter-spacing:0;">* </span>アニメーションプリセット</span>
<div style="left:1756px;top:270px;width:230px;height:1px;background:#1b1b1b;"></div>
<svg style="left:1762px;top:256px;" width="7" height="11" viewBox="0 0 7 11"><path d="M1.500 1l4 4.500-4 4.500" stroke="#c4c4c4" stroke-width="1.400" fill="none"/></svg>
<span class="t" style="left:1773.4px;top:256px;font-size:12.3px;color:#b9b9b9;letter-spacing:-1.29px;font-weight:500;"><span style="position:static;letter-spacing:0;">3D </span>チャンネル</span>
<div style="left:1756px;top:290px;width:230px;height:1px;background:#1b1b1b;"></div>
<svg style="left:1762px;top:275px;" width="7" height="11" viewBox="0 0 7 11"><path d="M1.500 1l4 4.500-4 4.500" stroke="#c4c4c4" stroke-width="1.400" fill="none"/></svg>
<span class="t" style="left:1773.4px;top:275px;font-size:12.3px;color:#b9b9b9;letter-spacing:-0.01px;font-weight:500;">Boris FX Mocha</span>
<div style="left:1756px;top:308px;width:230px;height:1px;background:#1b1b1b;"></div>
<svg style="left:1762px;top:294px;" width="7" height="11" viewBox="0 0 7 11"><path d="M1.500 1l4 4.500-4 4.500" stroke="#c4c4c4" stroke-width="1.400" fill="none"/></svg>
<span class="t" style="left:1773.4px;top:294px;font-size:12.3px;color:#b9b9b9;letter-spacing:-0.11px;font-weight:500;">CINEMA 4D</span>
<div style="left:1756px;top:328px;width:230px;height:1px;background:#1b1b1b;"></div>
<svg style="left:1762px;top:313px;" width="7" height="11" viewBox="0 0 7 11"><path d="M1.500 1l4 4.500-4 4.500" stroke="#c4c4c4" stroke-width="1.400" fill="none"/></svg>
<span class="t" style="left:1773.4px;top:313px;font-size:12.3px;color:#b9b9b9;letter-spacing:0.40px;font-weight:500;">Keying</span>
<div style="left:1756px;top:346px;width:230px;height:1px;background:#1b1b1b;"></div>
<svg style="left:1762px;top:332px;" width="7" height="11" viewBox="0 0 7 11"><path d="M1.500 1l4 4.500-4 4.500" stroke="#c4c4c4" stroke-width="1.400" fill="none"/></svg>
<span class="t" style="left:1773.4px;top:332px;font-size:12.3px;color:#b9b9b9;letter-spacing:0.83px;font-weight:500;">Matte</span>
<div style="left:1756px;top:366px;width:230px;height:1px;background:#1b1b1b;"></div>
<svg style="left:1762px;top:351px;" width="7" height="11" viewBox="0 0 7 11"><path d="M1.500 1l4 4.500-4 4.500" stroke="#c4c4c4" stroke-width="1.400" fill="none"/></svg>
<span class="t" style="left:1773.4px;top:351px;font-size:12.3px;color:#b9b9b9;letter-spacing:-1.42px;font-weight:500;">イマーシブビデオ</span>
<div style="left:1756px;top:384px;width:230px;height:1px;background:#1b1b1b;"></div>
<svg style="left:1762px;top:370px;" width="7" height="11" viewBox="0 0 7 11"><path d="M1.500 1l4 4.500-4 4.500" stroke="#c4c4c4" stroke-width="1.400" fill="none"/></svg>
<span class="t" style="left:1773.4px;top:370px;font-size:12.3px;color:#b9b9b9;letter-spacing:-2.06px;font-weight:500;">エクスプレッション<span style="position:static;letter-spacing:0;">制御</span></span>
<div style="left:1756px;top:404px;width:230px;height:1px;background:#1b1b1b;"></div>
<svg style="left:1762px;top:389px;" width="7" height="11" viewBox="0 0 7 11"><path d="M1.500 1l4 4.500-4 4.500" stroke="#c4c4c4" stroke-width="1.400" fill="none"/></svg>
<span class="t" style="left:1773.4px;top:389px;font-size:12.3px;color:#b9b9b9;letter-spacing:-1.51px;font-weight:500;">オーディオ</span>
<div style="left:1756px;top:422px;width:230px;height:1px;background:#1b1b1b;"></div>
<svg style="left:1762px;top:408px;" width="7" height="11" viewBox="0 0 7 11"><path d="M1.500 1l4 4.500-4 4.500" stroke="#c4c4c4" stroke-width="1.400" fill="none"/></svg>
<span class="t" style="left:1773.4px;top:408px;font-size:12.3px;color:#b9b9b9;letter-spacing:-1.97px;font-weight:500;">カラー<span style="position:static;letter-spacing:0;">補正</span></span>
<div style="left:1756px;top:442px;width:230px;height:1px;background:#1b1b1b;"></div>
<svg style="left:1762px;top:427px;" width="7" height="11" viewBox="0 0 7 11"><path d="M1.500 1l4 4.500-4 4.500" stroke="#c4c4c4" stroke-width="1.400" fill="none"/></svg>
<span class="t" style="left:1773.4px;top:427px;font-size:12.3px;color:#b9b9b9;letter-spacing:-1.85px;font-weight:500;">キーイング</span>
<div style="left:1756px;top:460px;width:230px;height:1px;background:#1b1b1b;"></div>
<svg style="left:1762px;top:446px;" width="7" height="11" viewBox="0 0 7 11"><path d="M1.500 1l4 4.500-4 4.500" stroke="#c4c4c4" stroke-width="1.400" fill="none"/></svg>
<span class="t" style="left:1773.4px;top:446px;font-size:12.3px;color:#b9b9b9;letter-spacing:-2.61px;font-weight:500;">シミュレーション</span>
<div style="left:1756px;top:480px;width:230px;height:1px;background:#1b1b1b;"></div>
<svg style="left:1762px;top:465px;" width="7" height="11" viewBox="0 0 7 11"><path d="M1.500 1l4 4.500-4 4.500" stroke="#c4c4c4" stroke-width="1.400" fill="none"/></svg>
<span class="t" style="left:1773.4px;top:465px;font-size:12.3px;color:#b9b9b9;letter-spacing:-1.82px;font-weight:500;">スタイライズ</span>
<div style="left:1756px;top:498px;width:230px;height:1px;background:#1b1b1b;"></div>
<svg style="left:1762px;top:484px;" width="7" height="11" viewBox="0 0 7 11"><path d="M1.500 1l4 4.500-4 4.500" stroke="#c4c4c4" stroke-width="1.400" fill="none"/></svg>
<span class="t" style="left:1773.4px;top:484px;font-size:12.3px;color:#b9b9b9;letter-spacing:-1.56px;font-weight:500;">チャンネル</span>
<div style="left:1756px;top:518px;width:230px;height:1px;background:#1b1b1b;"></div>
<svg style="left:1762px;top:503px;" width="7" height="11" viewBox="0 0 7 11"><path d="M1.500 1l4 4.500-4 4.500" stroke="#c4c4c4" stroke-width="1.400" fill="none"/></svg>
<span class="t" style="left:1773.4px;top:503px;font-size:12.3px;color:#b9b9b9;letter-spacing:-2.41px;font-weight:500;">テキスト</span>
<div style="left:1756px;top:536px;width:230px;height:1px;background:#1b1b1b;"></div>
<svg style="left:1762px;top:522px;" width="7" height="11" viewBox="0 0 7 11"><path d="M1.500 1l4 4.500-4 4.500" stroke="#c4c4c4" stroke-width="1.400" fill="none"/></svg>
<span class="t" style="left:1773.4px;top:522px;font-size:12.3px;color:#b9b9b9;letter-spacing:-2.53px;font-weight:500;">ディストーション</span>
<div style="left:1756px;top:556px;width:230px;height:1px;background:#1b1b1b;"></div>
<svg style="left:1762px;top:541px;" width="7" height="11" viewBox="0 0 7 11"><path d="M1.500 1l4 4.500-4 4.500" stroke="#c4c4c4" stroke-width="1.400" fill="none"/></svg>
<span class="t" style="left:1771.5px;top:541px;font-size:12.3px;color:#b9b9b9;letter-spacing:-2.70px;font-weight:500;">トランジション</span>
<div style="left:1756px;top:574px;width:230px;height:1px;background:#1b1b1b;"></div>
<svg style="left:1762px;top:560px;" width="7" height="11" viewBox="0 0 7 11"><path d="M1.500 1l4 4.500-4 4.500" stroke="#c4c4c4" stroke-width="1.400" fill="none"/></svg>
<span class="t" style="left:1773.4px;top:560px;font-size:12.3px;color:#b9b9b9;letter-spacing:-1.62px;font-weight:500;">ノイズ&amp;グレイン</span>
<div style="left:1756px;top:594px;width:230px;height:1px;background:#1b1b1b;"></div>
<svg style="left:1762px;top:579px;" width="7" height="11" viewBox="0 0 7 11"><path d="M1.500 1l4 4.500-4 4.500" stroke="#c4c4c4" stroke-width="1.400" fill="none"/></svg>
<span class="t" style="left:1773.4px;top:579px;font-size:12.3px;color:#b9b9b9;letter-spacing:-1.19px;font-weight:500;">ブラー&amp;シャープ</span>
<div style="left:1756px;top:612px;width:230px;height:1px;background:#1b1b1b;"></div>
<svg style="left:1762px;top:598px;" width="7" height="11" viewBox="0 0 7 11"><path d="M1.500 1l4 4.500-4 4.500" stroke="#c4c4c4" stroke-width="1.400" fill="none"/></svg>
<span class="t" style="left:1773.4px;top:598px;font-size:12.3px;color:#b9b9b9;letter-spacing:-3.00px;font-weight:500;">マット</span>
<div style="left:1756px;top:632px;width:230px;height:1px;background:#1b1b1b;"></div>
<svg style="left:1762px;top:617px;" width="7" height="11" viewBox="0 0 7 11"><path d="M1.500 1l4 4.500-4 4.500" stroke="#c4c4c4" stroke-width="1.400" fill="none"/></svg>
<span class="t" style="left:1773.4px;top:617px;font-size:12.3px;color:#b9b9b9;letter-spacing:-2.25px;font-weight:500;">ユーティリティ</span>
<div style="left:1756px;top:650px;width:230px;height:1px;background:#1b1b1b;"></div>
<svg style="left:1762px;top:636px;" width="7" height="11" viewBox="0 0 7 11"><path d="M1.500 1l4 4.500-4 4.500" stroke="#c4c4c4" stroke-width="1.400" fill="none"/></svg>
<span class="t" style="left:1773.4px;top:636px;font-size:12.3px;color:#b9b9b9;letter-spacing:-1.01px;font-weight:500;">描画</span>
<div style="left:1756px;top:670px;width:230px;height:1px;background:#1b1b1b;"></div>
<svg style="left:1762px;top:655px;" width="7" height="11" viewBox="0 0 7 11"><path d="M1.500 1l4 4.500-4 4.500" stroke="#c4c4c4" stroke-width="1.400" fill="none"/></svg>
<span class="t" style="left:1773.4px;top:655px;font-size:12.3px;color:#b9b9b9;letter-spacing:-1.85px;font-weight:500;"><span style="position:static;letter-spacing:0;">旧</span>バージョン</span>
<div style="left:1756px;top:688px;width:230px;height:1px;background:#1b1b1b;"></div>
<svg style="left:1762px;top:674px;" width="7" height="11" viewBox="0 0 7 11"><path d="M1.500 1l4 4.500-4 4.500" stroke="#c4c4c4" stroke-width="1.400" fill="none"/></svg>
<span class="t" style="left:1773.4px;top:674px;font-size:12.3px;color:#b9b9b9;letter-spacing:-1.01px;font-weight:500;">時間</span>
<div style="left:1756px;top:708px;width:230px;height:1px;background:#1b1b1b;"></div>
<svg style="left:1762px;top:693px;" width="7" height="11" viewBox="0 0 7 11"><path d="M1.500 1l4 4.500-4 4.500" stroke="#c4c4c4" stroke-width="1.400" fill="none"/></svg>
<span class="t" style="left:1773.4px;top:693px;font-size:12.3px;color:#b9b9b9;letter-spacing:-0.31px;font-weight:500;">遠近</span>
<div style="left:1756px;top:708px;width:230px;height:2px;background:#151515;"></div>
<svg style="left:1963px;top:710.5px;" width="15" height="16" viewBox="0 0 15 16"><path d="M0.500 0.500h14v15H6L0.500 9.500z" fill="#c8c8c8"/><path d="M0.500 9.500H6V15z" fill="#8a8a8a" stroke="#232323" stroke-width="0.800"/></svg>
<div style="left:1756px;top:730px;width:230px;height:2px;background:#151515;"></div>
<span class="t" style="left:1769px;top:742px;font-size:12.3px;color:#a2a2a2;">整列</span>
<div style="left:1756px;top:763px;width:230px;height:2px;background:#151515;"></div>
<span class="t" style="left:1769px;top:775px;font-size:12.3px;color:#a2a2a2;letter-spacing:-1.02px;">CC ライブラリ</span>
<div style="left:1756px;top:797px;width:230px;height:2px;background:#151515;"></div>
<span class="t" style="left:1769px;top:810px;font-size:12.3px;color:#a2a2a2;">文字</span>
<div style="left:0px;top:816px;width:2000px;height:434px;background:#1f1f1f;"></div>
<div style="left:0px;top:815.5px;width:2000px;height:2px;background:#151515;"></div>
<div style="left:0.3px;top:817.4px;width:1999.4px;height:432.3px;background:#232323;border:1.200px solid #01042e;"></div>
<div style="left:1.5px;top:818.6px;width:1997px;height:429.9px;background:#232323;border:2px solid #5471a4;"></div>
<div style="left:3.5px;top:820.6px;width:1993px;height:425.9px;background:#232323;border:1px solid #0d0f17;"></div>
<span class="t" style="left:32.5px;top:829.5px;font-size:12.3px;color:#a0a0a0;letter-spacing:-0.68px;">レンダーキュー</span>
<span class="t" style="left:158px;top:829px;font-size:13px;color:#a0a0a0;">×</span>
<div style="left:175.5px;top:828px;width:12.5px;height:11.5px;background:#b59c7a;"></div>
<span class="t" style="left:200px;top:829.5px;font-size:12.3px;color:#e0e0e0;letter-spacing:-0.53px;">Countdown</span>
<svg style="left:268.5px;top:830.5px;" width="11" height="10" viewBox="0 0 11 10"><path d="M0 1.500h10M0 5h10M0 8.500h10" stroke="#cfcfcf" stroke-width="1.300"/></svg>
<div style="left:160px;top:846px;width:119px;height:2px;background:#c9c9c9;"></div>
<span class="t" style="left:32px;top:857px;font-size:15.8px;color:#3f97ea;letter-spacing:0.61px;font-weight:bold;">0:00:00:00</span>
<span class="t" style="left:13.5px;top:873.5px;font-size:13.2px;color:#2b6cb4;letter-spacing:0.58px;">00000 (23.976 fps)</span>
<div style="left:149px;top:859px;width:407px;height:20px;background:#171717;border-radius:3px;"></div>
<svg style="left:155px;top:862px;" width="22" height="14" viewBox="0 0 22 14"><circle cx="8" cy="5.500" r="3.800" fill="none" stroke="#c4c4c4" stroke-width="1.300"/><path d="M5.300 8.200L1 12.500" stroke="#c4c4c4" stroke-width="1.500"/><path d="M13 8.500h6l-3 3z" fill="#c4c4c4"/></svg>
<svg style="left:574px;top:862px;" width="19" height="16" viewBox="0 0 19 16"><path d="M1 4h6M7 4v7h6M7 4h6" stroke="#c4c4c4" stroke-width="1.400" fill="none"/><rect x="0" y="2.500" width="3" height="3" fill="#c4c4c4"/><rect x="12" y="2.500" width="5" height="3" fill="#c4c4c4"/><rect x="12" y="9.500" width="5" height="3" fill="#c4c4c4"/><path d="M13 14h5l-2.500 2.500z" fill="#c4c4c4"/></svg>
<svg style="left:610px;top:859px;" width="21" height="21" viewBox="0 0 21 21"><path d="M5 0v9M0.500 4.500h9M1.800 1.300l6.400 6.400M8.200 1.300L1.800 7.700" stroke="#c4c4c4" stroke-width="1.300"/><path d="M13.500 8l6 2.500v6.500l-6 3-6-3V10.500z" fill="none" stroke="#c4c4c4" stroke-width="1.400"/><path d="M7.500 10.500l6 3 6-3M13.500 13.500V20" stroke="#c4c4c4" stroke-width="1.300" fill="none"/></svg>
<svg style="left:648px;top:861px;" width="20" height="18" viewBox="0 0 20 18"><path d="M4.500 8.500a5.500 5.500 0 0 1 11 0z" fill="#c4c4c4"/><rect x="1" y="10" width="18" height="7" fill="#8a8a8a"/><path d="M1 10h18M7 10v4h6v-4" stroke="#c4c4c4" stroke-width="1.400" fill="none"/><path d="M10 2v11" stroke="#232323" stroke-width="1.200"/></svg>
<svg style="left:679px;top:861px;" width="18" height="18" viewBox="0 0 18 18"><rect x="4" y="1" width="13" height="12" fill="#c4c4c4"/><path d="M6 3.500h9M6 10.500h9" stroke="#232323" stroke-width="1.500" stroke-dasharray="1.500 1.500"/><rect x="7" y="5.500" width="7" height="3" fill="#232323"/><path d="M2.500 3v12h12M0.800 5.500v12h12" stroke="#c4c4c4" stroke-width="1.300" fill="none"/></svg>
<svg style="left:706px;top:861px;" width="20" height="18" viewBox="0 0 20 18"><circle cx="8" cy="11" r="6" fill="none" stroke="#c4c4c4" stroke-width="1.300"/><circle cx="10" cy="9" r="6" fill="#232323" stroke="#c4c4c4" stroke-width="1.300"/><circle cx="12.500" cy="6.800" r="6" fill="#8a8a8a" stroke="#c4c4c4" stroke-width="1.300"/></svg>
<svg style="left:745px;top:860px;" width="19" height="20" viewBox="0 0 19 20"><rect x="2" y="3" width="15" height="14" fill="none" stroke="#c4c4c4" stroke-width="1.500"/><path d="M4 6.500c5 0 5 8 11 8" stroke="#c4c4c4" stroke-width="1.400" fill="none"/><path d="M5 0.500v3M9.500 0.500v3M14 0.500v3M0 7h2.500M0 12h2.500" stroke="#c4c4c4" stroke-width="1.300"/></svg>
<div style="left:3px;top:890px;width:779px;height:1px;background:#161616;"></div>
<div style="left:3px;top:891px;width:779px;height:20px;background:#2a2a2a;"></div>
<div style="left:3px;top:911px;width:779px;height:1px;background:#1a1a1a;"></div>
<svg style="left:8px;top:896px;" width="13.5" height="10.5" viewBox="0 0 16 11"><path d="M0.500 5.500C3 1 13 1 15.500 5.500 13 10 3 10 0.500 5.500z" fill="#c4c4c4"/><circle cx="8" cy="5.500" r="3.200" fill="#2a2a2a"/><circle cx="8" cy="5.500" r="1.700" fill="#c4c4c4"/></svg>
<svg style="left:24px;top:894px;" width="14" height="14" viewBox="0 0 14 14"><path d="M0.500 4.500h3l4-3.500v12l-4-3.500h-3z" fill="#c4c4c4"/><path d="M9 4a4 4 0 0 1 0 6M10.500 2a6.500 6.500 0 0 1 0 10" stroke="#c4c4c4" stroke-width="1.300" fill="none"/></svg>
<div style="left:43px;top:897px;width:9px;height:9px;background:#c4c4c4;border-radius:50%;"></div>
<svg style="left:58px;top:893px;" width="12" height="14" viewBox="0 0 12 14"><rect x="0.500" y="6" width="11" height="7.500" rx="1" fill="#c4c4c4"/><path d="M3 6V4a3 3 0 0 1 6 0v2" fill="none" stroke="#c4c4c4" stroke-width="1.600"/><rect x="5.200" y="8" width="1.600" height="3.500" fill="#2a2a2a"/></svg>
<div style="left:77px;top:895px;width:1px;height:12px;background:#444;"></div>
<div style="left:113px;top:895px;width:1px;height:12px;background:#444;"></div>
<div style="left:149px;top:895px;width:1px;height:12px;background:#444;"></div>
<div style="left:295px;top:895px;width:1px;height:12px;background:#444;"></div>
<div style="left:448px;top:895px;width:1px;height:12px;background:#444;"></div>
<div style="left:633px;top:895px;width:1px;height:12px;background:#444;"></div>
<div style="left:763px;top:895px;width:1px;height:12px;background:#444;"></div>
<svg style="left:92px;top:893px;" width="15" height="15" viewBox="0 0 15 15"><path d="M1 1h6.500l6.500 6.500L8 13.500 1 7z" fill="#c4c4c4"/><circle cx="4" cy="4" r="1.300" fill="#2a2a2a"/></svg>
<span class="t" style="left:119px;top:897px;font-size:10.5px;color:#8a8a8a;">#</span>
<span class="t" style="left:157px;top:895px;font-size:13px;color:#8a8a8a;letter-spacing:-0.300px;">レイヤー名</span>
<svg style="left:300px;top:894px;" width="15" height="14" viewBox="0 0 15 14"><path d="M2 8.500a5.500 6.500 0 0 1 11 0z" fill="#c4c4c4"/><circle cx="5.800" cy="5.500" r="1.100" fill="#2a2a2a"/><circle cx="9.200" cy="5.500" r="1.100" fill="#2a2a2a"/><path d="M6.700 5.500h1.600v4.500H6.700z" fill="#c4c4c4" stroke="#2a2a2a" stroke-width="0.500"/><path d="M0.500 10.500h14" stroke="#c4c4c4" stroke-width="1.300" fill="none"/></svg>
<svg style="left:317px;top:893.5px;" width="14" height="14" viewBox="0 0 14 14"><path d="M7 1.500v2.600" stroke="#c4c4c4" stroke-width="1.200" transform="rotate(0 7 7)"/><path d="M7 1.500v2.600" stroke="#c4c4c4" stroke-width="1.200" transform="rotate(45 7 7)"/><path d="M7 1.500v2.600" stroke="#c4c4c4" stroke-width="1.200" transform="rotate(90 7 7)"/><path d="M7 1.500v2.600" stroke="#c4c4c4" stroke-width="1.200" transform="rotate(135 7 7)"/><path d="M7 1.500v2.600" stroke="#c4c4c4" stroke-width="1.200" transform="rotate(180 7 7)"/><path d="M7 1.500v2.600" stroke="#c4c4c4" stroke-width="1.200" transform="rotate(225 7 7)"/><path d="M7 1.500v2.600" stroke="#c4c4c4" stroke-width="1.200" transform="rotate(270 7 7)"/><path d="M7 1.500v2.600" stroke="#c4c4c4" stroke-width="1.200" transform="rotate(315 7 7)"/><circle cx="7" cy="7" r="2.200" fill="none" stroke="#c4c4c4" stroke-width="1.200"/></svg>
<svg style="left:334px;top:895px;" width="13" height="13" viewBox="0 0 13 13"><path d="M1 1l11 11" stroke="#c4c4c4" stroke-width="1.600" stroke-dasharray="2 1"/></svg>
<span class="t" style="left:350.5px;top:892.5px;font-size:15px;color:#c4c4c4;font-style:italic;font-weight:400;letter-spacing:-0.500px;">fx</span>
<svg style="left:367px;top:894px;" width="15" height="14" viewBox="0 0 15 14"><rect x="2.500" y="0.500" width="12" height="11" fill="#c4c4c4"/><path d="M4.500 2.500h8M4.500 9.500h8" stroke="#2a2a2a" stroke-width="1.300" stroke-dasharray="1.300 1.300"/><rect x="5" y="4.500" width="7" height="3" fill="#2a2a2a"/><path d="M0.800 2.500v11h11.500" stroke="#c4c4c4" stroke-width="1.300" fill="none"/></svg>
<svg style="left:383px;top:893px;" width="16" height="16" viewBox="0 0 16 16"><circle cx="6" cy="10" r="4.800" fill="none" stroke="#c4c4c4" stroke-width="1.200"/><circle cx="8" cy="8" r="4.800" fill="#2a2a2a" stroke="#c4c4c4" stroke-width="1.200"/><circle cx="10" cy="6" r="4.800" fill="#8a8a8a" stroke="#c4c4c4" stroke-width="1.200"/></svg>
<svg style="left:401px;top:894px;" width="14" height="14" viewBox="0 0 14 14"><circle cx="7" cy="7" r="6" fill="#c4c4c4"/><path d="M11.200 2.800A6 6 0 0 1 2.800 11.200z" fill="#2a2a2a"/><circle cx="7" cy="7" r="6" fill="none" stroke="#c4c4c4" stroke-width="1.200"/></svg>
<svg style="left:418.5px;top:894.5px;" width="13" height="13.5" viewBox="0 0 15 16"><path d="M7.500 1l6 2.800v7.400l-6 3.300-6-3.300V3.800z" fill="none" stroke="#c4c4c4" stroke-width="1.400"/><path d="M1.500 3.800l6 3 6-3M7.500 6.800v7.700" stroke="#c4c4c4" stroke-width="1.300" fill="none"/></svg>
<span class="t" style="left:455px;top:895px;font-size:13px;color:#8a8a8a;">モード</span>
<span class="t" style="left:539px;top:896px;font-size:11.5px;color:#8a8a8a;">T</span>
<span class="t" style="left:557px;top:896px;font-size:12px;color:#8a8a8a;transform:scaleX(0.58);transform-origin:0 0;">トラックマット</span>
<span class="t" style="left:640px;top:895px;font-size:13px;color:#8a8a8a;">親とリンク</span>
<div style="left:3px;top:912px;width:779px;height:20px;background:#3c3c3c;"></div>
<div style="left:3px;top:932px;width:779px;height:1px;background:#222;"></div>
<div style="left:6.5px;top:913px;width:15px;height:18px;background:#353535;"></div>
<svg style="left:8px;top:916px;" width="13.5" height="10.5" viewBox="0 0 16 11"><path d="M0.500 5.500C3 1 13 1 15.500 5.500 13 10 3 10 0.500 5.500z" fill="#d4d4d4"/><circle cx="8" cy="5.500" r="3.200" fill="#353535"/><circle cx="8" cy="5.500" r="1.700" fill="#d4d4d4"/></svg>
<div style="left:40px;top:914px;width:14.5px;height:14.5px;background:#353535;"></div>
<div style="left:57px;top:914px;width:14.5px;height:14.5px;background:#353535;"></div>
<svg style="left:83px;top:916px;" width="7" height="12" viewBox="0 0 7 12"><path d="M1.500 1.500L6 6l-4.500 4.500" stroke="#c4c4c4" stroke-width="1.400" fill="none"/></svg>
<div style="left:97px;top:914px;width:16px;height:16px;background:#6373e6;"></div>
<span class="t" style="left:120px;top:916.5px;font-size:13.5px;color:#c4c4c4;">1</span>
<div style="left:150px;top:912px;width:151px;height:20px;background:#474747;"></div>
<svg style="left:154px;top:915px;" width="15" height="14" viewBox="0 0 15 14"><path d="M7.500 0.500l2.100 4.600 5 .6-3.700 3.400 1 5-4.400-2.500-4.400 2.500 1-5L.4 5.700l5-.6z" fill="#d0d0d0"/></svg>
<div style="left:173px;top:912px;width:122px;height:20px;background:#969696;"></div>
<span class="t" style="left:176px;top:916.5px;font-size:13.3px;color:#1c1c1c;">Line-Vertical</span>
<svg style="left:300px;top:914px;" width="15" height="14" viewBox="0 0 15 14"><path d="M2 8.500a5.500 6.500 0 0 1 11 0z" fill="#c4c4c4"/><circle cx="5.800" cy="5.500" r="1.100" fill="#3c3c3c"/><circle cx="9.200" cy="5.500" r="1.100" fill="#3c3c3c"/><path d="M6.700 5.500h1.600v4.500H6.700z" fill="#c4c4c4" stroke="#3c3c3c" stroke-width="0.500"/><path d="M0.500 10.500h14" stroke="#c4c4c4" stroke-width="1.300" fill="none"/></svg>
<div style="left:317px;top:914px;width:14.5px;height:14.5px;background:#353535;"></div>
<svg style="left:317.3px;top:914.3px;" width="14" height="14" viewBox="0 0 14 14"><path d="M7 1.500v2.600" stroke="#7a7a7a" stroke-width="1.200" transform="rotate(0 7 7)"/><path d="M7 1.500v2.600" stroke="#7a7a7a" stroke-width="1.200" transform="rotate(45 7 7)"/><path d="M7 1.500v2.600" stroke="#7a7a7a" stroke-width="1.200" transform="rotate(90 7 7)"/><path d="M7 1.500v2.600" stroke="#7a7a7a" stroke-width="1.200" transform="rotate(135 7 7)"/><path d="M7 1.500v2.600" stroke="#7a7a7a" stroke-width="1.200" transform="rotate(180 7 7)"/><path d="M7 1.500v2.600" stroke="#7a7a7a" stroke-width="1.200" transform="rotate(225 7 7)"/><path d="M7 1.500v2.600" stroke="#7a7a7a" stroke-width="1.200" transform="rotate(270 7 7)"/><path d="M7 1.500v2.600" stroke="#7a7a7a" stroke-width="1.200" transform="rotate(315 7 7)"/><circle cx="7" cy="7" r="2.200" fill="none" stroke="#7a7a7a" stroke-width="1.200"/></svg>
<div style="left:334px;top:914px;width:14.5px;height:14.5px;background:#353535;"></div>
<svg style="left:335px;top:914.5px;" width="13" height="14" viewBox="0 0 13 14"><path d="M1.500 12.500l10-11" stroke="#c4c4c4" stroke-width="1.600"/></svg>
<div style="left:384px;top:914px;width:14.5px;height:14.5px;background:#353535;"></div>
<div style="left:401px;top:914px;width:14.5px;height:14.5px;background:#353535;"></div>
<div style="left:418px;top:914px;width:14.5px;height:14.5px;background:#353535;"></div>
<div style="left:452px;top:913px;width:77px;height:18px;background:#1e1e1e;border-radius:1px;"></div>
<span class="t" style="left:459px;top:917px;font-size:12.3px;color:#d4d4d4;">通常</span>
<svg style="left:514px;top:919px;" width="10" height="7" viewBox="0 0 10 7"><path d="M1 1l4 4 4-4" stroke="#c4c4c4" stroke-width="1.500" fill="none"/></svg>
<div style="left:535px;top:914px;width:14.5px;height:14.5px;background:#353535;"></div>
<svg style="left:638.2px;top:914.2px;" width="15" height="15" viewBox="0 0 15 15"><path d="M10.26 1.64 L11.27 2.42 L12.08 3.39 L12.67 4.48 L13.02 5.65 L13.13 6.84 L12.99 8.02 L12.61 9.12 L12.03 10.11 L11.28 10.95 L10.38 11.60 L9.39 12.05 L8.34 12.28 L7.29 12.30 L6.28 12.10 L5.34 11.70 L4.52 11.14 L3.85 10.43 L3.35 9.61 L3.03 8.73 L2.90 7.82 L2.95 6.92 L3.19 6.07 L3.59 5.30 L4.12 4.65 L4.77 4.13 L5.48 3.76 L6.25 3.55 L7.02 3.50 L7.76 3.62 L8.45 3.87 L9.05 4.25 L9.55 4.74 L9.93 5.30 L10.17 5.91 L10.29 6.54 L10.27 7.16 L10.12 7.74 L9.87 8.27 L9.52 8.71 L9.10 9.07 L8.64 9.32 L8.15 9.46 L7.66 9.49 L7.19 9.42 L6.77 9.26 L6.40 9.03 L6.10 8.74 L5.89 8.40 L5.76 8.05 L5.70 7.69 L5.73 7.35 L5.83 7.03 L5.98 6.77 L6.17 6.55 L6.40 6.40 L6.63 6.31 L6.87 6.28 L7.08 6.30 L7.28 6.37 L7.43 6.47" fill="none" stroke="#b4b4b4" stroke-width="1.400" stroke-linecap="round" stroke-linejoin="round"/></svg>
<div style="left:660px;top:913px;width:99px;height:18px;background:#1e1e1e;border-radius:1px;"></div>
<span class="t" style="left:666px;top:917px;font-size:12.3px;color:#d4d4d4;">なし</span>
<svg style="left:744px;top:919px;" width="10" height="7" viewBox="0 0 10 7"><path d="M1 1l4 4 4-4" stroke="#c4c4c4" stroke-width="1.500" fill="none"/></svg>
<div style="left:3px;top:933px;width:779px;height:20px;background:#3c3c3c;"></div>
<div style="left:3px;top:953px;width:779px;height:1px;background:#222;"></div>
<div style="left:6.5px;top:934px;width:15px;height:18px;background:#353535;"></div>
<svg style="left:8px;top:937px;" width="13.5" height="10.5" viewBox="0 0 16 11"><path d="M0.500 5.500C3 1 13 1 15.500 5.500 13 10 3 10 0.500 5.500z" fill="#d4d4d4"/><circle cx="8" cy="5.500" r="3.200" fill="#353535"/><circle cx="8" cy="5.500" r="1.700" fill="#d4d4d4"/></svg>
<div style="left:40px;top:935px;width:14.5px;height:14.5px;background:#353535;"></div>
<div style="left:57px;top:935px;width:14.5px;height:14.5px;background:#353535;"></div>
<svg style="left:83px;top:937px;" width="7" height="12" viewBox="0 0 7 12"><path d="M1.500 1.500L6 6l-4.500 4.500" stroke="#c4c4c4" stroke-width="1.400" fill="none"/></svg>
<div style="left:97px;top:935px;width:16px;height:16px;background:#6373e6;"></div>
<span class="t" style="left:120px;top:937.5px;font-size:13.5px;color:#c4c4c4;">2</span>
<div style="left:150px;top:933px;width:151px;height:20px;background:#474747;"></div>
<svg style="left:154px;top:936px;" width="15" height="14" viewBox="0 0 15 14"><path d="M7.500 0.500l2.100 4.600 5 .6-3.700 3.400 1 5-4.400-2.500-4.400 2.500 1-5L.4 5.700l5-.6z" fill="#d0d0d0"/></svg>
<div style="left:173px;top:933px;width:122px;height:20px;background:#969696;"></div>
<span class="t" style="left:176px;top:937.5px;font-size:13.3px;color:#1c1c1c;">Line-Horizontal</span>
<svg style="left:300px;top:935px;" width="15" height="14" viewBox="0 0 15 14"><path d="M2 8.500a5.500 6.500 0 0 1 11 0z" fill="#c4c4c4"/><circle cx="5.800" cy="5.500" r="1.100" fill="#3c3c3c"/><circle cx="9.200" cy="5.500" r="1.100" fill="#3c3c3c"/><path d="M6.700 5.500h1.600v4.500H6.700z" fill="#c4c4c4" stroke="#3c3c3c" stroke-width="0.500"/><path d="M0.500 10.500h14" stroke="#c4c4c4" stroke-width="1.300" fill="none"/></svg>
<div style="left:317px;top:935px;width:14.5px;height:14.5px;background:#353535;"></div>
<svg style="left:317.3px;top:935.3px;" width="14" height="14" viewBox="0 0 14 14"><path d="M7 1.500v2.600" stroke="#7a7a7a" stroke-width="1.200" transform="rotate(0 7 7)"/><path d="M7 1.500v2.600" stroke="#7a7a7a" stroke-width="1.200" transform="rotate(45 7 7)"/><path d="M7 1.500v2.600" stroke="#7a7a7a" stroke-width="1.200" transform="rotate(90 7 7)"/><path d="M7 1.500v2.600" stroke="#7a7a7a" stroke-width="1.200" transform="rotate(135 7 7)"/><path d="M7 1.500v2.600" stroke="#7a7a7a" stroke-width="1.200" transform="rotate(180 7 7)"/><path d="M7 1.500v2.600" stroke="#7a7a7a" stroke-width="1.200" transform="rotate(225 7 7)"/><path d="M7 1.500v2.600" stroke="#7a7a7a" stroke-width="1.200" transform="rotate(270 7 7)"/><path d="M7 1.500v2.600" stroke="#7a7a7a" stroke-width="1.200" transform="rotate(315 7 7)"/><circle cx="7" cy="7" r="2.200" fill="none" stroke="#7a7a7a" stroke-width="1.200"/></svg>
<div style="left:334px;top:935px;width:14.5px;height:14.5px;background:#353535;"></div>
<svg style="left:335px;top:935.5px;" width="13" height="14" viewBox="0 0 13 14"><path d="M1.500 12.500l10-11" stroke="#c4c4c4" stroke-width="1.600"/></svg>
<div style="left:384px;top:935px;width:14.5px;height:14.5px;background:#353535;"></div>
<div style="left:401px;top:935px;width:14.5px;height:14.5px;background:#353535;"></div>
<div style="left:418px;top:935px;width:14.5px;height:14.5px;background:#353535;"></div>
<div style="left:452px;top:934px;width:77px;height:18px;background:#1e1e1e;border-radius:1px;"></div>
<span class="t" style="left:459px;top:938px;font-size:12.3px;color:#d4d4d4;">通常</span>
<svg style="left:514px;top:940px;" width="10" height="7" viewBox="0 0 10 7"><path d="M1 1l4 4 4-4" stroke="#c4c4c4" stroke-width="1.500" fill="none"/></svg>
<div style="left:535px;top:935px;width:14.5px;height:14.5px;background:#353535;"></div>
<div style="left:556px;top:934px;width:73px;height:18px;background:#1e1e1e;border-radius:1px;"></div>
<span class="t" style="left:562.5px;top:938px;font-size:12.3px;color:#d4d4d4;">なし</span>
<svg style="left:614px;top:940px;" width="10" height="7" viewBox="0 0 10 7"><path d="M1 1l4 4 4-4" stroke="#c4c4c4" stroke-width="1.500" fill="none"/></svg>
<div style="left:629.5px;top:933px;width:29.5px;height:20px;background:#414141;"></div>
<svg style="left:638.2px;top:935.2px;" width="15" height="15" viewBox="0 0 15 15"><path d="M10.26 1.64 L11.27 2.42 L12.08 3.39 L12.67 4.48 L13.02 5.65 L13.13 6.84 L12.99 8.02 L12.61 9.12 L12.03 10.11 L11.28 10.95 L10.38 11.60 L9.39 12.05 L8.34 12.28 L7.29 12.30 L6.28 12.10 L5.34 11.70 L4.52 11.14 L3.85 10.43 L3.35 9.61 L3.03 8.73 L2.90 7.82 L2.95 6.92 L3.19 6.07 L3.59 5.30 L4.12 4.65 L4.77 4.13 L5.48 3.76 L6.25 3.55 L7.02 3.50 L7.76 3.62 L8.45 3.87 L9.05 4.25 L9.55 4.74 L9.93 5.30 L10.17 5.91 L10.29 6.54 L10.27 7.16 L10.12 7.74 L9.87 8.27 L9.52 8.71 L9.10 9.07 L8.64 9.32 L8.15 9.46 L7.66 9.49 L7.19 9.42 L6.77 9.26 L6.40 9.03 L6.10 8.74 L5.89 8.40 L5.76 8.05 L5.70 7.69 L5.73 7.35 L5.83 7.03 L5.98 6.77 L6.17 6.55 L6.40 6.40 L6.63 6.31 L6.87 6.28 L7.08 6.30 L7.28 6.37 L7.43 6.47" fill="none" stroke="#b4b4b4" stroke-width="1.400" stroke-linecap="round" stroke-linejoin="round"/></svg>
<div style="left:660px;top:934px;width:99px;height:18px;background:#1e1e1e;border-radius:1px;"></div>
<span class="t" style="left:666px;top:938px;font-size:12.3px;color:#d4d4d4;">なし</span>
<svg style="left:744px;top:940px;" width="10" height="7" viewBox="0 0 10 7"><path d="M1 1l4 4 4-4" stroke="#c4c4c4" stroke-width="1.500" fill="none"/></svg>
<div style="left:3px;top:954px;width:779px;height:20px;background:#2b2b2b;"></div>
<div style="left:3px;top:974px;width:779px;height:1px;background:#222;"></div>
<div style="left:6.5px;top:955px;width:15px;height:18px;background:#232323;"></div>
<svg style="left:8px;top:958px;" width="13.5" height="10.5" viewBox="0 0 16 11"><path d="M0.500 5.500C3 1 13 1 15.500 5.500 13 10 3 10 0.500 5.500z" fill="#d4d4d4"/><circle cx="8" cy="5.500" r="3.200" fill="#232323"/><circle cx="8" cy="5.500" r="1.700" fill="#d4d4d4"/></svg>
<div style="left:40px;top:956px;width:14.5px;height:14.5px;background:#232323;"></div>
<div style="left:57px;top:956px;width:14.5px;height:14.5px;background:#232323;"></div>
<svg style="left:83px;top:958px;" width="7" height="12" viewBox="0 0 7 12"><path d="M1.500 1.500L6 6l-4.500 4.500" stroke="#c4c4c4" stroke-width="1.400" fill="none"/></svg>
<div style="left:97px;top:956px;width:16px;height:16px;background:#b5333c;"></div>
<span class="t" style="left:120px;top:958.5px;font-size:13.5px;color:#c4c4c4;">3</span>
<div style="left:154px;top:956px;width:16px;height:16px;background:#6e6e6e;"></div>
<span class="t" style="left:176px;top:958.5px;font-size:13.3px;color:#c4c4c4;">Wipe</span>
<svg style="left:300px;top:956px;" width="15" height="14" viewBox="0 0 15 14"><path d="M2 8.500a5.500 6.500 0 0 1 11 0z" fill="#c4c4c4"/><circle cx="5.800" cy="5.500" r="1.100" fill="#2b2b2b"/><circle cx="9.200" cy="5.500" r="1.100" fill="#2b2b2b"/><path d="M6.700 5.500h1.600v4.500H6.700z" fill="#c4c4c4" stroke="#2b2b2b" stroke-width="0.500"/><path d="M0.500 10.500h14" stroke="#c4c4c4" stroke-width="1.300" fill="none"/></svg>
<div style="left:317px;top:956px;width:14.5px;height:14.5px;background:#232323;"></div>
<div style="left:334px;top:956px;width:14.5px;height:14.5px;background:#232323;"></div>
<svg style="left:335px;top:956.5px;" width="13" height="14" viewBox="0 0 13 14"><path d="M1.500 12.500l10-11" stroke="#c4c4c4" stroke-width="1.600"/></svg>
<div style="left:384px;top:956px;width:14.5px;height:14.5px;background:#232323;"></div>
<div style="left:401px;top:956px;width:14.5px;height:14.5px;background:#232323;"></div>
<div style="left:418px;top:956px;width:14.5px;height:14.5px;background:#232323;"></div>
<div style="left:452px;top:955px;width:77px;height:18px;background:#1e1e1e;border-radius:1px;"></div>
<span class="t" style="left:459px;top:959px;font-size:12.3px;color:#d4d4d4;">通常</span>
<svg style="left:514px;top:961px;" width="10" height="7" viewBox="0 0 10 7"><path d="M1 1l4 4 4-4" stroke="#c4c4c4" stroke-width="1.500" fill="none"/></svg>
<div style="left:535px;top:956px;width:14.5px;height:14.5px;background:#232323;"></div>
<div style="left:556px;top:955px;width:73px;height:18px;background:#1e1e1e;border-radius:1px;"></div>
<span class="t" style="left:562.5px;top:959px;font-size:12.3px;color:#d4d4d4;">なし</span>
<svg style="left:614px;top:961px;" width="10" height="7" viewBox="0 0 10 7"><path d="M1 1l4 4 4-4" stroke="#c4c4c4" stroke-width="1.500" fill="none"/></svg>
<svg style="left:638.2px;top:956.2px;" width="15" height="15" viewBox="0 0 15 15"><path d="M10.26 1.64 L11.27 2.42 L12.08 3.39 L12.67 4.48 L13.02 5.65 L13.13 6.84 L12.99 8.02 L12.61 9.12 L12.03 10.11 L11.28 10.95 L10.38 11.60 L9.39 12.05 L8.34 12.28 L7.29 12.30 L6.28 12.10 L5.34 11.70 L4.52 11.14 L3.85 10.43 L3.35 9.61 L3.03 8.73 L2.90 7.82 L2.95 6.92 L3.19 6.07 L3.59 5.30 L4.12 4.65 L4.77 4.13 L5.48 3.76 L6.25 3.55 L7.02 3.50 L7.76 3.62 L8.45 3.87 L9.05 4.25 L9.55 4.74 L9.93 5.30 L10.17 5.91 L10.29 6.54 L10.27 7.16 L10.12 7.74 L9.87 8.27 L9.52 8.71 L9.10 9.07 L8.64 9.32 L8.15 9.46 L7.66 9.49 L7.19 9.42 L6.77 9.26 L6.40 9.03 L6.10 8.74 L5.89 8.40 L5.76 8.05 L5.70 7.69 L5.73 7.35 L5.83 7.03 L5.98 6.77 L6.17 6.55 L6.40 6.40 L6.63 6.31 L6.87 6.28 L7.08 6.30 L7.28 6.37 L7.43 6.47" fill="none" stroke="#b4b4b4" stroke-width="1.400" stroke-linecap="round" stroke-linejoin="round"/></svg>
<div style="left:660px;top:955px;width:99px;height:18px;background:#1e1e1e;border-radius:1px;"></div>
<span class="t" style="left:666px;top:959px;font-size:12.3px;color:#d4d4d4;">なし</span>
<svg style="left:744px;top:961px;" width="10" height="7" viewBox="0 0 10 7"><path d="M1 1l4 4 4-4" stroke="#c4c4c4" stroke-width="1.500" fill="none"/></svg>
<div style="left:3px;top:975px;width:779px;height:20px;background:#2b2b2b;"></div>
<div style="left:3px;top:995px;width:779px;height:1px;background:#222;"></div>
<div style="left:6.5px;top:976px;width:15px;height:18px;background:#232323;"></div>
<svg style="left:8px;top:979px;" width="13.5" height="10.5" viewBox="0 0 16 11"><path d="M0.500 5.500C3 1 13 1 15.500 5.500 13 10 3 10 0.500 5.500z" fill="#d4d4d4"/><circle cx="8" cy="5.500" r="3.200" fill="#232323"/><circle cx="8" cy="5.500" r="1.700" fill="#d4d4d4"/></svg>
<div style="left:40px;top:977px;width:14.5px;height:14.5px;background:#232323;"></div>
<div style="left:57px;top:977px;width:14.5px;height:14.5px;background:#232323;"></div>
<svg style="left:83px;top:979px;" width="7" height="12" viewBox="0 0 7 12"><path d="M1.500 1.500L6 6l-4.500 4.500" stroke="#c4c4c4" stroke-width="1.400" fill="none"/></svg>
<div style="left:97px;top:977px;width:16px;height:16px;background:#b5333c;"></div>
<span class="t" style="left:120px;top:979.5px;font-size:13.5px;color:#c4c4c4;">4</span>
<div style="left:154px;top:977px;width:16px;height:16px;background:#ececec;"></div>
<span class="t" style="left:176px;top:979.5px;font-size:13.3px;color:#c4c4c4;">BG</span>
<svg style="left:300px;top:977px;" width="15" height="14" viewBox="0 0 15 14"><path d="M2 8.500a5.500 6.500 0 0 1 11 0z" fill="#c4c4c4"/><circle cx="5.800" cy="5.500" r="1.100" fill="#2b2b2b"/><circle cx="9.200" cy="5.500" r="1.100" fill="#2b2b2b"/><path d="M6.700 5.500h1.600v4.500H6.700z" fill="#c4c4c4" stroke="#2b2b2b" stroke-width="0.500"/><path d="M0.500 10.500h14" stroke="#c4c4c4" stroke-width="1.300" fill="none"/></svg>
<div style="left:317px;top:977px;width:14.5px;height:14.5px;background:#232323;"></div>
<div style="left:334px;top:977px;width:14.5px;height:14.5px;background:#232323;"></div>
<svg style="left:335px;top:977.5px;" width="13" height="14" viewBox="0 0 13 14"><path d="M1.500 12.500l10-11" stroke="#c4c4c4" stroke-width="1.600"/></svg>
<div style="left:384px;top:977px;width:14.5px;height:14.5px;background:#232323;"></div>
<div style="left:401px;top:977px;width:14.5px;height:14.5px;background:#232323;"></div>
<div style="left:418px;top:977px;width:14.5px;height:14.5px;background:#232323;"></div>
<div style="left:452px;top:976px;width:77px;height:18px;background:#1e1e1e;border-radius:1px;"></div>
<span class="t" style="left:459px;top:980px;font-size:12.3px;color:#d4d4d4;">通常</span>
<svg style="left:514px;top:982px;" width="10" height="7" viewBox="0 0 10 7"><path d="M1 1l4 4 4-4" stroke="#c4c4c4" stroke-width="1.500" fill="none"/></svg>
<div style="left:535px;top:977px;width:14.5px;height:14.5px;background:#232323;"></div>
<div style="left:556px;top:976px;width:73px;height:18px;background:#1e1e1e;border-radius:1px;"></div>
<span class="t" style="left:562.5px;top:980px;font-size:12.3px;color:#d4d4d4;">なし</span>
<svg style="left:614px;top:982px;" width="10" height="7" viewBox="0 0 10 7"><path d="M1 1l4 4 4-4" stroke="#c4c4c4" stroke-width="1.500" fill="none"/></svg>
<svg style="left:638.2px;top:977.2px;" width="15" height="15" viewBox="0 0 15 15"><path d="M10.26 1.64 L11.27 2.42 L12.08 3.39 L12.67 4.48 L13.02 5.65 L13.13 6.84 L12.99 8.02 L12.61 9.12 L12.03 10.11 L11.28 10.95 L10.38 11.60 L9.39 12.05 L8.34 12.28 L7.29 12.30 L6.28 12.10 L5.34 11.70 L4.52 11.14 L3.85 10.43 L3.35 9.61 L3.03 8.73 L2.90 7.82 L2.95 6.92 L3.19 6.07 L3.59 5.30 L4.12 4.65 L4.77 4.13 L5.48 3.76 L6.25 3.55 L7.02 3.50 L7.76 3.62 L8.45 3.87 L9.05 4.25 L9.55 4.74 L9.93 5.30 L10.17 5.91 L10.29 6.54 L10.27 7.16 L10.12 7.74 L9.87 8.27 L9.52 8.71 L9.10 9.07 L8.64 9.32 L8.15 9.46 L7.66 9.49 L7.19 9.42 L6.77 9.26 L6.40 9.03 L6.10 8.74 L5.89 8.40 L5.76 8.05 L5.70 7.69 L5.73 7.35 L5.83 7.03 L5.98 6.77 L6.17 6.55 L6.40 6.40 L6.63 6.31 L6.87 6.28 L7.08 6.30 L7.28 6.37 L7.43 6.47" fill="none" stroke="#b4b4b4" stroke-width="1.400" stroke-linecap="round" stroke-linejoin="round"/></svg>
<div style="left:660px;top:976px;width:99px;height:18px;background:#1e1e1e;border-radius:1px;"></div>
<span class="t" style="left:666px;top:980px;font-size:12.3px;color:#d4d4d4;">なし</span>
<svg style="left:744px;top:982px;" width="10" height="7" viewBox="0 0 10 7"><path d="M1 1l4 4 4-4" stroke="#c4c4c4" stroke-width="1.500" fill="none"/></svg>
<div style="left:781px;top:850px;width:2px;height:378px;background:#151515;"></div>
<div style="left:783px;top:850px;width:1203px;height:378px;background:#2f2f2f;"></div>
<div style="left:783px;top:850px;width:7.5px;height:378px;background:#232323;"></div>
<div style="left:783px;top:850px;width:1203px;height:6px;background:#232323;"></div>
<div style="left:783px;top:856px;width:1197px;height:1px;background:#0c0c0c;"></div>
<div style="left:783px;top:857px;width:1197px;height:9px;background:#5c5c5c;"></div>
<div style="left:783px;top:857px;width:8px;height:9px;background:#3d8de8;border-radius:5px 0 0 5px;"></div>
<div style="left:1971px;top:857px;width:8px;height:9px;background:#3d8de8;border-radius:0 5px 5px 0;"></div>
<div style="left:783px;top:866px;width:1197px;height:22px;background:#1c1c1c;"></div>
<div style="left:783px;top:866px;width:1196px;height:23px;overflow:hidden;">
<span class="t" style="left:3.6px;top:2px;font-size:13.500px;letter-spacing:0.800px;color:#b4b4b4;">00f</span>
<div style="left:81px;top:17px;width:1px;height:6px;background:#a0a0a0;"></div>
<span class="t" style="left:51.4px;top:2px;width:60px;text-align:center;font-size:13.500px;letter-spacing:0.800px;color:#b4b4b4;">00:12f</span>
<div style="left:155px;top:17px;width:1px;height:6px;background:#a0a0a0;"></div>
<span class="t" style="left:125.3px;top:2px;width:60px;text-align:center;font-size:13.500px;letter-spacing:0.800px;color:#b4b4b4;">01:00f</span>
<div style="left:229px;top:17px;width:1px;height:6px;background:#a0a0a0;"></div>
<span class="t" style="left:199.1px;top:2px;width:60px;text-align:center;font-size:13.500px;letter-spacing:0.800px;color:#b4b4b4;">01:12f</span>
<div style="left:303px;top:17px;width:1px;height:6px;background:#a0a0a0;"></div>
<span class="t" style="left:273.0px;top:2px;width:60px;text-align:center;font-size:13.500px;letter-spacing:0.800px;color:#b4b4b4;">02:00f</span>
<div style="left:377px;top:17px;width:1px;height:6px;background:#a0a0a0;"></div>
<span class="t" style="left:346.8px;top:2px;width:60px;text-align:center;font-size:13.500px;letter-spacing:0.800px;color:#b4b4b4;">02:12f</span>
<div style="left:451px;top:17px;width:1px;height:6px;background:#a0a0a0;"></div>
<span class="t" style="left:420.6px;top:2px;width:60px;text-align:center;font-size:13.500px;letter-spacing:0.800px;color:#b4b4b4;">03:00f</span>
<div style="left:524px;top:17px;width:1px;height:6px;background:#a0a0a0;"></div>
<span class="t" style="left:494.5px;top:2px;width:60px;text-align:center;font-size:13.500px;letter-spacing:0.800px;color:#b4b4b4;">03:12f</span>
<div style="left:598px;top:17px;width:1px;height:6px;background:#a0a0a0;"></div>
<span class="t" style="left:568.3px;top:2px;width:60px;text-align:center;font-size:13.500px;letter-spacing:0.800px;color:#b4b4b4;">04:00f</span>
<div style="left:672px;top:17px;width:1px;height:6px;background:#a0a0a0;"></div>
<span class="t" style="left:642.2px;top:2px;width:60px;text-align:center;font-size:13.500px;letter-spacing:0.800px;color:#b4b4b4;">04:12f</span>
<div style="left:746px;top:17px;width:1px;height:6px;background:#a0a0a0;"></div>
<span class="t" style="left:716.0px;top:2px;width:60px;text-align:center;font-size:13.500px;letter-spacing:0.800px;color:#b4b4b4;">05:00f</span>
<div style="left:820px;top:17px;width:1px;height:6px;background:#a0a0a0;"></div>
<span class="t" style="left:789.8px;top:2px;width:60px;text-align:center;font-size:13.500px;letter-spacing:0.800px;color:#b4b4b4;">05:12f</span>
<div style="left:894px;top:17px;width:1px;height:6px;background:#a0a0a0;"></div>
<span class="t" style="left:863.7px;top:2px;width:60px;text-align:center;font-size:13.500px;letter-spacing:0.800px;color:#b4b4b4;">06:00f</span>
<div style="left:968px;top:17px;width:1px;height:6px;background:#a0a0a0;"></div>
<span class="t" style="left:937.5px;top:2px;width:60px;text-align:center;font-size:13.500px;letter-spacing:0.800px;color:#b4b4b4;">06:12f</span>
<div style="left:1041px;top:17px;width:1px;height:6px;background:#a0a0a0;"></div>
<span class="t" style="left:1011.4px;top:2px;width:60px;text-align:center;font-size:13.500px;letter-spacing:0.800px;color:#b4b4b4;">07:00f</span>
<div style="left:1115px;top:17px;width:1px;height:6px;background:#a0a0a0;"></div>
<span class="t" style="left:1085.2px;top:2px;width:60px;text-align:center;font-size:13.500px;letter-spacing:0.800px;color:#b4b4b4;">07:12f</span>
<div style="left:1189px;top:17px;width:1px;height:6px;background:#a0a0a0;"></div>
<span class="t" style="left:1159.0px;top:2px;width:60px;text-align:center;font-size:13.500px;letter-spacing:0.800px;color:#b4b4b4;">08:00f</span>
</div>
<div style="left:783px;top:888px;width:1197px;height:1px;background:#111;"></div>
<div style="left:783px;top:889px;width:1197px;height:17.5px;background:#565656;"></div>
<div style="left:783px;top:889px;width:8px;height:17.5px;background:#3d8de8;border-radius:4px 0 0 4px;"></div>
<div style="left:1971px;top:889px;width:8px;height:17.5px;background:#3d8de8;border-radius:0 4px 4px 0;"></div>
<div style="left:791px;top:906.5px;width:1180px;height:4px;background:#29b430;"></div>
<div style="left:783px;top:906.5px;width:8px;height:5.5px;background:#232323;"></div>
<div style="left:783px;top:912px;width:1197px;height:21px;background:#2c2c2c;"></div>
<div style="left:783px;top:912px;width:8px;height:21px;background:#4a4a4a;"></div>
<div style="left:783px;top:932px;width:8px;height:1px;background:#222;"></div>
<div style="left:791px;top:912.6px;width:1180px;height:18.3px;background:linear-gradient(#8d9aeb 0,#5468d2 3px,#5468d2 70%,#4257bf 100%);"></div>
<div style="left:783px;top:933px;width:1197px;height:21px;background:#2c2c2c;"></div>
<div style="left:783px;top:933px;width:8px;height:21px;background:#4a4a4a;"></div>
<div style="left:783px;top:953px;width:8px;height:1px;background:#222;"></div>
<div style="left:791px;top:933.65px;width:1180px;height:18.3px;background:linear-gradient(#8d9aeb 0,#5468d2 3px,#5468d2 70%,#4257bf 100%);"></div>
<div style="left:783px;top:954px;width:1197px;height:21px;background:#323232;"></div>
<div style="left:783px;top:954px;width:8px;height:21px;background:#292929;"></div>
<div style="left:783px;top:974px;width:8px;height:1px;background:#222;"></div>
<div style="left:791px;top:954.7px;width:1180px;height:18.3px;background:linear-gradient(#7a4040 0,#713636 3px,#713636 70%,#6a3232 100%);"></div>
<div style="left:783px;top:975px;width:1197px;height:21px;background:#323232;"></div>
<div style="left:783px;top:975px;width:8px;height:21px;background:#292929;"></div>
<div style="left:783px;top:995px;width:8px;height:1px;background:#222;"></div>
<div style="left:791px;top:975.75px;width:1180px;height:18.3px;background:linear-gradient(#7a4040 0,#713636 3px,#713636 70%,#6a3232 100%);"></div>
<div style="left:791px;top:910.5px;width:1180px;height:1.8px;background:#0c0c0c;"></div>
<div style="left:791px;top:906px;width:1180px;height:0.7px;background:#111;"></div>
<div style="left:1971px;top:906.5px;width:8px;height:322px;background:#262626;"></div>
<div style="left:1971px;top:912px;width:8px;height:41px;background:#4a4a4a;"></div>
<div style="left:1971px;top:932px;width:8px;height:1px;background:#333;"></div>
<div style="left:1979px;top:857px;width:1.5px;height:371px;background:#111;"></div>
<div style="left:1981px;top:850px;width:16px;height:378px;background:#232323;"></div>
<svg style="left:1983px;top:892px;" width="12" height="14" viewBox="0 0 12 14"><path d="M0.500 0.500h11v8L6 13.500 0.500 8.500z" fill="#c4c4c4"/></svg>
<svg style="left:1981px;top:916px;" width="15" height="14" viewBox="0 0 15 14"><path d="M6 2h8.500v7H6L1 5.500z" fill="none" stroke="#c4c4c4" stroke-width="1.300"/><circle cx="6.500" cy="9.500" r="3" fill="#232323" stroke="#c4c4c4" stroke-width="1.300"/></svg>
<div style="left:789.3px;top:886px;width:3px;height:342px;background:#15233a;"></div>
<div style="left:789.9px;top:886px;width:1.8px;height:342px;background:#5280b8;"></div>
<svg style="left:783px;top:872px;" width="16" height="16" viewBox="0 0 16 16"><path d="M1 1.500h14v6L8 15 1 7.500z" fill="#3d8de8"/></svg>
<div style="left:3px;top:1228px;width:1994px;height:1px;background:#111;"></div>
<div style="left:3px;top:1229px;width:1994px;height:18px;background:#1d1d1d;"></div>
<div style="left:3px;top:1229px;width:900px;height:18px;background:#232323;"></div>
<svg style="left:8px;top:1232px;" width="14" height="14" viewBox="0 0 14 14"><rect x="1" y="1" width="9" height="9" rx="1.500" fill="none" stroke="#3d8de8" stroke-width="1.400"/><rect x="4.500" y="4.500" width="8.500" height="8.500" rx="1.500" fill="#232323" stroke="#3d8de8" stroke-width="1.400"/><rect x="7" y="7" width="3.500" height="3.500" fill="#3d8de8"/></svg>
<svg style="left:28px;top:1232px;" width="15" height="14" viewBox="0 0 15 14"><circle cx="6" cy="6" r="4.800" fill="none" stroke="#3d8de8" stroke-width="1.400"/><rect x="6.500" y="6.500" width="7" height="6.500" rx="1" fill="#232323" stroke="#3d8de8" stroke-width="1.400"/></svg>
<span class="t" style="left:48.5px;top:1230.5px;font-size:14px;color:#c4c4c4;font-weight:bold;letter-spacing:1.500px;">{}</span>
<svg style="left:788px;top:1235px;" width="12" height="7" viewBox="0 0 12 7"><path d="M0 6.500l4-5 2.500 3 1.500-1.500 3.500 3.500z" fill="#c4c4c4"/></svg>
<div style="left:822px;top:1237.5px;width:43px;height:2.5px;background:#444;"></div>
<div style="left:811px;top:1233.5px;width:12.5px;height:12.5px;background:#232323;border:2.500px solid #a0a0a0;border-radius:50%;"></div>
<svg style="left:877px;top:1233px;" width="20" height="10" viewBox="0 0 20 10"><path d="M0 9.500l6-8 4 5 2.500-3 7 6z" fill="#c4c4c4"/></svg>
<div style="left:256px;top:37px;width:41px;height:39px;border:6px solid #fc2608;"></div>
<div style="left:144.7px;top:904px;width:163.9px;height:56.7px;border:7.200px solid #fc2608;"></div>
<svg style="left:0px;top:0px;pointer-events:none;" width="2000" height="1250" viewBox="0 0 2000 1250"><g fill="none" stroke="#fc2608" stroke-width="8.500" stroke-linecap="butt" stroke-linejoin="round">
<path d="M296.0 55.5 C301.7 58.1 320.2 66.8 330.0 71.0 C339.8 75.2 346.7 77.4 355.0 81.0 C363.3 84.6 371.7 88.6 380.0 92.5 C388.3 96.4 397.5 100.8 405.0 104.2 C412.5 107.6 417.5 109.8 425.0 113.0 C432.5 116.2 441.7 120.0 450.0 123.5 C458.3 127.0 466.7 130.5 475.0 133.8 C483.3 137.0 490.8 139.0 500.0 142.8 C509.2 146.5 516.7 151.3 530.0 156.5 C543.3 161.7 563.3 168.3 580.0 174.0 C596.7 179.7 616.7 186.3 630.0 190.5 C643.3 194.7 646.7 195.2 660.0 199.4 C673.3 203.6 693.3 210.1 710.0 215.6 C726.7 221.1 743.3 227.4 760.0 232.2 C776.7 237.0 793.3 240.5 810.0 244.2 C826.7 247.9 843.3 251.2 860.0 254.2 C876.7 257.2 893.3 260.1 910.0 262.4 C926.7 264.7 942.0 266.7 960.0 268.2 C978.0 269.7 1008.3 271.0 1018.0 271.6"/>
<path d="M296.0 56.0 C301.7 58.6 320.2 67.2 330.0 71.8 C339.8 76.3 346.7 79.0 355.0 83.3 C363.3 87.6 371.7 93.0 380.0 97.8 C388.3 102.5 397.5 107.4 405.0 111.8 C412.5 116.2 417.5 118.6 425.0 124.0 C432.5 129.4 443.3 138.8 450.0 144.0 C456.7 149.2 460.0 151.8 465.0 155.5 C470.0 159.2 473.3 160.9 480.0 166.5 C486.7 172.1 496.7 180.7 505.0 188.8 C513.3 196.9 519.5 203.4 530.0 215.0 C540.5 226.6 557.6 244.8 568.0 258.4 C578.4 272.0 585.3 284.0 592.5 296.8 C599.7 309.6 605.6 322.4 611.0 335.2 C616.4 348.0 621.1 361.4 624.8 373.5 C628.4 385.6 631.3 401.2 632.9 408.0 C634.5 414.8 634.1 413.0 634.3 414.0" stroke-width="9"/>
</g>
<path fill="#fc2608" d="M1049 272L1016.500 255.500L1016.500 288z"/>
<path fill="#fc2608" d="M639 442.300L617 412.500L649 407z"/></svg>
</div></body></html>
